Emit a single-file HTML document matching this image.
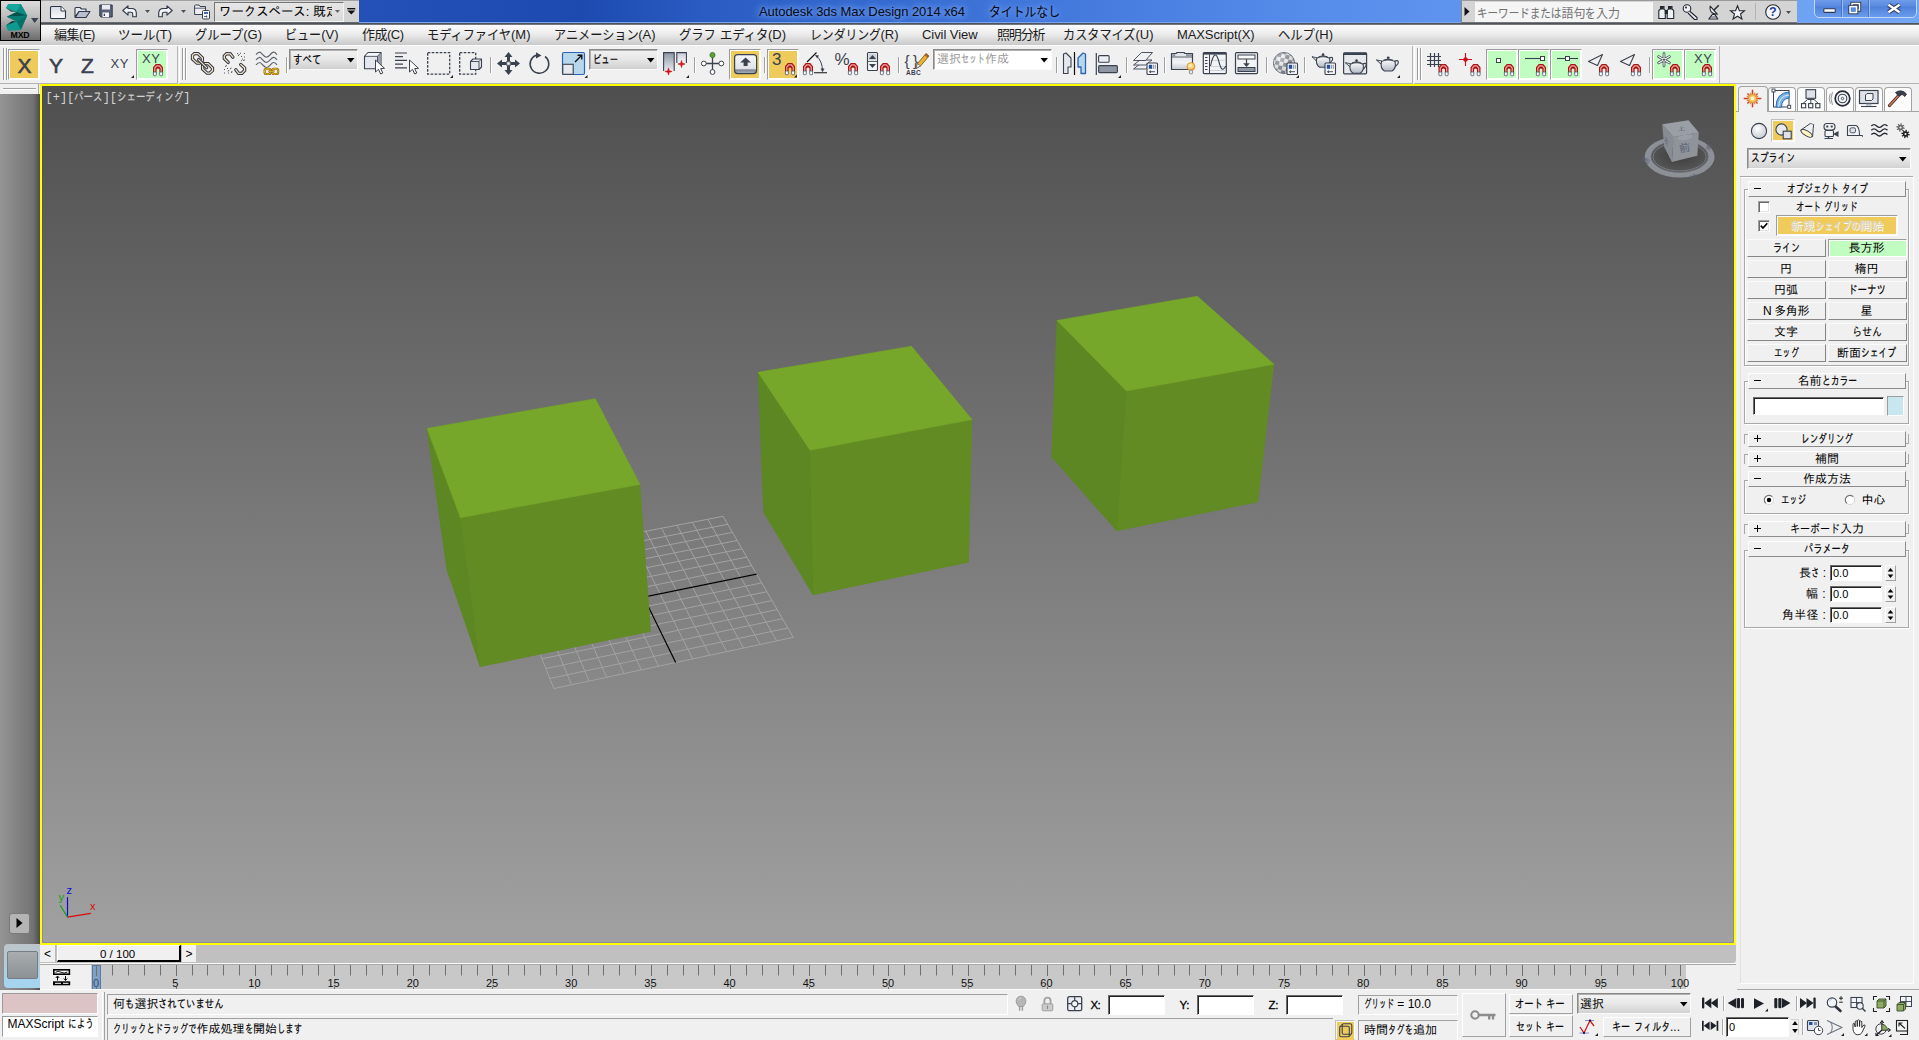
<!DOCTYPE html><html lang="ja"><head><meta charset="utf-8"><title>Autodesk 3ds Max Design 2014 x64</title><style>

html,body{margin:0;padding:0;}
body{width:1919px;height:1040px;overflow:hidden;position:relative;background:#f0f0f0;
 font-family:"Liberation Sans","IPAGothic","Noto Sans CJK JP",sans-serif;font-size:12px;color:#000;}
.a{position:absolute;}
.ui{font-family:"Liberation Sans","IPAGothic","Noto Sans CJK JP",sans-serif;}
.mei{font-family:"Liberation Sans","Noto Sans CJK JP",sans-serif;}
svg{position:absolute;overflow:visible;}


#title{left:0;top:0;width:1919px;height:23px;background:linear-gradient(90deg,#2451b7 0px,#2451b7 360px,#1c4aaf 580px,#2a5bc2 700px,#3f74d8 1000px,#558cea 1300px,#679cf2 1600px,#71a6f5 1919px);}
#titleb{left:0;top:22px;width:1919px;height:1px;background:#7aa6ee;}
#titleb2{left:0;top:23px;width:1919px;height:2px;background:linear-gradient(#3a3f4a,#8a8a8a);}
#menu{left:0;top:25px;width:1919px;height:20px;background:linear-gradient(#fbfbfb,#ececec 45%,#c9c9c9);}
#qat{left:41px;top:0;width:318px;height:23px;background:linear-gradient(#dadada,#d2d2d2);border-bottom:1px solid #6a6a6a;box-sizing:border-box;}
#appbtn{left:0;top:0;width:41px;height:41px;box-sizing:border-box;border:1px solid #000;background:linear-gradient(#dcdcdc,#bdbdbd 40%,#6c6c6c);}
#srch{left:1461px;top:0;width:336px;height:23px;background:#d4d4d4;border-bottom:1px solid #777;border-left:1px solid #888;box-sizing:border-box;}
#wc{left:1814px;top:-4px;width:103px;height:22px;box-sizing:border-box;border:1px solid #c4d6f4;border-radius:0 0 5px 5px;background:linear-gradient(#78a4ee,#5a8ae0 45%,#4f82dc 50%,#6a9cec);}


#tb{left:0;top:45px;width:1919px;height:39px;background:#f0f0f0;}
.dd{box-sizing:border-box;border:1px solid #8a8a8a;border-right-color:#fbfbfb;border-bottom-color:#fbfbfb;box-shadow:inset 1px 1px 0 #b0b0b0;background:linear-gradient(#f2f2f2,#e6e6e6 50%,#d0d0d0);}
.btnon{box-sizing:border-box;border:1px solid #b8b8b8;border-right-color:#fafafa;border-bottom-color:#fafafa;background:#f8f8f8;}


#vp{left:40px;top:84px;width:1696px;height:861px;background:#ffff00;}
#vpi{left:2px;top:2px;width:1692px;height:857px;background:linear-gradient(#4f4f4f,#a1a1a1);overflow:hidden;box-shadow:inset 0 0 0 1px rgba(70,70,120,0.22);}



#rp{left:1736px;top:84px;width:183px;height:906px;background:#f0f0f0;}
.hd{box-sizing:border-box;border:1px solid #fff;border-right-color:#8c8c8c;border-bottom-color:#8c8c8c;background:#f0f0f0;}
.bt{box-sizing:border-box;border:1px solid #fafafa;border-right-color:#868686;border-bottom-color:#868686;background:#f0f0f0;}
.bton{box-sizing:border-box;border:1px solid #9c9c9c;border-right-color:#fff;border-bottom-color:#fff;background:#fafafa;}
.fr{box-sizing:border-box;border:1px solid #a8a8a8;box-shadow:1px 1px 0 #fff, inset 1px 1px 0 #fff;}
.inp{box-sizing:border-box;border:1px solid #6a6a6a;border-right-color:#fff;border-bottom-color:#fff;box-shadow:inset 1px 1px 0 #222;background:#fff;}
.tab{box-sizing:border-box;border:1px solid #a4a4a4;border-bottom:none;border-radius:4px 4px 0 0;background:#fcfcfc;}


#ls{left:0;top:94px;width:40px;height:896px;background:linear-gradient(90deg,#959595 0,#8a8a8a 25%,#808080 50%,#777777 75%,#707070 84%,#5c5c5c 93%,#4c4c52 100%);}
#lstop{left:0;top:84px;width:40px;height:10px;background:#f0f0f0;}
#tsl{left:40px;top:945px;width:1696px;height:18px;background:#c0c0c0;border-radius:0 0 3px 0;}
#trk{left:91px;top:965px;width:1595px;height:24px;background:#c8c8c8;}
#trkl{left:40px;top:965px;width:51px;height:25px;background:#f0f0f0;}
#st{left:0;top:990px;width:1919px;height:50px;background:#f0f0f0;}
.sunk{box-sizing:border-box;border:1px solid #a0a0a0;border-right-color:#fff;border-bottom-color:#fff;background:#f0f0f0;}
.inp2{box-sizing:border-box;border:1px solid #6a6a6a;border-right-color:#fff;border-bottom-color:#fff;box-shadow:inset 1px 1px 0 #222;background:#fff;}
.rb{box-sizing:border-box;border:1px solid #fff;border-right-color:#a0a0a0;border-bottom-color:#a0a0a0;background:#f0f0f0;}

</style></head><body>
<div id="title" class="a"></div><div id="titleb" class="a"></div><div id="titleb2" class="a"></div><div id="menu" class="a"></div><div id="qat" class="a"></div><div class="a" style="left:41px;top:0px;width:318px;height:1px;background:#a2a2a2;"></div><div class="a" style="left:759px;top:4px;font-size:13px;color:#0a0a14;white-space:pre;line-height:16px;letter-spacing:-0.07px;text-shadow:0 0 5px #78a6f4,0 0 9px #78a6f4,0 0 12px #6a9cf0;">Autodesk 3ds Max Design 2014 x64</div><div class="a" style="left:989px;top:4px;font-size:13px;color:#0a0a14;white-space:pre;line-height:16px;font-family:'Liberation Sans','Noto Sans CJK JP',sans-serif;text-shadow:0 0 5px #78a6f4,0 0 9px #78a6f4,0 0 12px #6a9cf0;"><span style="display:inline-block;width:71.00px;vertical-align:top"><span style="display:inline-block;transform:scaleX(0.910);transform-origin:0 50%;-webkit-text-stroke:0.08px">タイトルなし</span></span></div><div class="a" style="left:54px;top:27px;font-size:13px;color:#1c1c1c;white-space:pre;line-height:16px;font-family:'Liberation Sans','Noto Sans CJK JP',sans-serif;letter-spacing:-0.47px;">編集(E)</div><div class="a" style="left:118px;top:27px;font-size:13px;color:#1c1c1c;white-space:pre;line-height:16px;font-family:'Liberation Sans','Noto Sans CJK JP',sans-serif;"><span style="display:inline-block;width:37.39px;vertical-align:top"><span style="display:inline-block;transform:scaleX(0.958);transform-origin:0 50%;-webkit-text-stroke:0.08px">ツール</span></span>(T)</div><div class="a" style="left:195px;top:27px;font-size:13px;color:#1c1c1c;white-space:pre;line-height:16px;font-family:'Liberation Sans','Noto Sans CJK JP',sans-serif;"><span style="display:inline-block;width:48.22px;vertical-align:top"><span style="display:inline-block;transform:scaleX(0.941);transform-origin:0 50%;-webkit-text-stroke:0.08px">グループ</span></span>(G)</div><div class="a" style="left:285px;top:27px;font-size:13px;color:#1c1c1c;white-space:pre;line-height:16px;font-family:'Liberation Sans','Noto Sans CJK JP',sans-serif;"><span style="display:inline-block;width:36.16px;vertical-align:top"><span style="display:inline-block;transform:scaleX(0.927);transform-origin:0 50%;-webkit-text-stroke:0.08px">ビュー</span></span>(V)</div><div class="a" style="left:362px;top:27px;font-size:13px;color:#1c1c1c;white-space:pre;line-height:16px;font-family:'Liberation Sans','Noto Sans CJK JP',sans-serif;letter-spacing:-0.51px;">作成(C)</div><div class="a" style="left:427px;top:27px;font-size:13px;color:#1c1c1c;white-space:pre;line-height:16px;font-family:'Liberation Sans','Noto Sans CJK JP',sans-serif;"><span style="display:inline-block;width:84.00px;vertical-align:top"><span style="display:inline-block;transform:scaleX(0.936);transform-origin:0 50%;-webkit-text-stroke:0.08px">モディファイヤ</span></span>(M)</div><div class="a" style="left:553.5px;top:27px;font-size:13px;color:#1c1c1c;white-space:pre;line-height:16px;font-family:'Liberation Sans','Noto Sans CJK JP',sans-serif;"><span style="display:inline-block;width:84.66px;vertical-align:top"><span style="display:inline-block;transform:scaleX(0.936);transform-origin:0 50%;-webkit-text-stroke:0.08px">アニメーション</span></span>(A)</div><div class="a" style="left:679px;top:27px;font-size:13px;color:#1c1c1c;white-space:pre;line-height:16px;font-family:'Liberation Sans','Noto Sans CJK JP',sans-serif;"><span style="display:inline-block;width:36.95px;vertical-align:top"><span style="display:inline-block;transform:scaleX(0.947);transform-origin:0 50%;-webkit-text-stroke:0.08px">グラフ</span></span> <span style="display:inline-block;width:48.38px;vertical-align:top"><span style="display:inline-block;transform:scaleX(0.947);transform-origin:0 50%;-webkit-text-stroke:0.08px">エディタ</span></span>(D)</div><div class="a" style="left:809.5px;top:27px;font-size:13px;color:#1c1c1c;white-space:pre;line-height:16px;font-family:'Liberation Sans','Noto Sans CJK JP',sans-serif;"><span style="display:inline-block;width:70.95px;vertical-align:top"><span style="display:inline-block;transform:scaleX(0.909);transform-origin:0 50%;-webkit-text-stroke:0.08px">レンダリング</span></span>(R)</div><div class="a" style="left:922px;top:27px;font-size:13px;color:#1c1c1c;white-space:pre;line-height:16px;font-family:'Liberation Sans','Noto Sans CJK JP',sans-serif;letter-spacing:-0.06px;">Civil View</div><div class="a" style="left:997px;top:27px;font-size:13px;color:#1c1c1c;white-space:pre;line-height:16px;font-family:'Liberation Sans','Noto Sans CJK JP',sans-serif;letter-spacing:-1.13px;">照明分析</div><div class="a" style="left:1063px;top:27px;font-size:13px;color:#1c1c1c;white-space:pre;line-height:16px;font-family:'Liberation Sans','Noto Sans CJK JP',sans-serif;"><span style="display:inline-block;width:72.45px;vertical-align:top"><span style="display:inline-block;transform:scaleX(0.933);transform-origin:0 50%;-webkit-text-stroke:0.08px">カスタマイズ</span></span>(U)</div><div class="a" style="left:1177px;top:27px;font-size:13px;color:#1c1c1c;white-space:pre;line-height:16px;font-family:'Liberation Sans','Noto Sans CJK JP',sans-serif;letter-spacing:-0.10px;">MAXScript(X)</div><div class="a" style="left:1278px;top:27px;font-size:13px;color:#1c1c1c;white-space:pre;line-height:16px;font-family:'Liberation Sans','Noto Sans CJK JP',sans-serif;"><span style="display:inline-block;width:36.95px;vertical-align:top"><span style="display:inline-block;transform:scaleX(0.947);transform-origin:0 50%;-webkit-text-stroke:0.08px">ヘルプ</span></span>(H)</div><div id="appbtn" class="a"></div><svg style="left:0px;top:0px" width="41" height="41" viewBox="0 0 41 41"><polygon points="6,8 8.2,4.2 20.8,4 27.2,15.5 20.8,30 8.2,30.6 6,25.2 16.5,21.5 6.8,16.8 16.5,12" fill="#0c8f86"/><polygon points="6,8 8.2,4.2 20.8,4 16.5,12" fill="#17a69b"/><polygon points="20.8,4 27.2,15.5 16.5,12" fill="#0d8c83"/><polygon points="16.5,12 27.2,15.5 6.8,16.8" fill="#04524e"/><polygon points="6.8,16.8 27.2,15.5 16.5,21.5" fill="#0a7d75"/><polygon points="16.5,21.5 27.2,15.5 20.8,30" fill="#087068"/><polygon points="16.5,21.5 20.8,30 8.2,30.6 6,25.2" fill="#10998f"/><polygon points="16.5,21.5 6,25.2 12,21" fill="#033f3c"/><polygon points="16.5,12 6,8 11,11.8" fill="#033f3c" opacity="0.8"/><polygon points="31,18 38.5,18 34.7,23" fill="#39414e"/></svg><div class="a" style="left:10.5px;top:30px;font-size:8.8px;color:#000;white-space:pre;line-height:10px;font-weight:bold;letter-spacing:-0.19px;">MXD</div><svg style="left:50px;top:5px" width="16" height="15" viewBox="0 0 16 15"><defs><linearGradient id="gpaper" x1="0" y1="0" x2="0" y2="1"><stop offset="0" stop-color="#d7dbe4"/><stop offset="1" stop-color="#fbfbfd"/></linearGradient></defs><path d="M1.5 1.5H11L15.5 6V12.5Q15.5 13.5 14.5 13.5H1.5Q0.5 13.5 0.5 12.5V2.5Q0.5 1.5 1.5 1.5Z" fill="url(#gpaper)" stroke="#2f3848" stroke-width="1.1"/><path d="M11 1.5V6H15.5" fill="#fff" stroke="#2f3848" stroke-width="1"/></svg><svg style="left:73.5px;top:4.5px" width="17" height="14" viewBox="0 0 17 14"><path d="M1 3.5Q1 2.5 2 2.5H6L7.5 4H12V6.5H5L1 12Z" fill="#e8eaf0" stroke="#2f3848" stroke-width="1.1" stroke-linejoin="round"/><path d="M1.3 12.5L5 6.5H16L12 12.5Z" fill="#b9bfcc" stroke="#2f3848" stroke-width="1.1" stroke-linejoin="round"/></svg><svg style="left:99px;top:4px" width="14" height="14" viewBox="0 0 14 14"><path d="M0.8 1H13.2V13H2L0.8 12Z" fill="#586379" stroke="#2f3848" stroke-width="1"/><rect x="3" y="1" width="8" height="4.5" fill="#e9ebf0"/><rect x="3.5" y="8.5" width="6.5" height="4.5" fill="#f4f5f8"/><rect x="4.7" y="9.8" width="1.3" height="2.2" fill="#2f3848"/></svg><svg style="left:122px;top:4.5px" width="15" height="13" viewBox="0 0 15 13"><path d="M0.8 5.5L6 0.9V3.5H9.5Q14.3 3.5 14.3 8.3V11.8H10.7V8.8Q10.7 7.2 9 7.2H6V10.2Z" fill="#f2f3f6" stroke="#2f3848" stroke-width="1.1" stroke-linejoin="round"/></svg><svg style="left:145px;top:10px" width="5" height="4" viewBox="0 0 5 4"><polygon points="0,0 5,0 2.5,3" fill="#4a4f5a"/></svg><svg style="left:158px;top:4.5px" width="15" height="13" viewBox="0 0 15 13"><path d="M14.2 5.5L9 0.9V3.5H5.5Q0.7 3.5 0.7 8.3V11.8H4.3V8.8Q4.3 7.2 6 7.2H9V10.2Z" fill="#f2f3f6" stroke="#2f3848" stroke-width="1.1" stroke-linejoin="round"/></svg><svg style="left:181px;top:10px" width="5" height="4" viewBox="0 0 5 4"><polygon points="0,0 5,0 2.5,3" fill="#4a4f5a"/></svg><svg style="left:194px;top:3.5px" width="17" height="16" viewBox="0 0 17 16"><path d="M0.6 2Q0.6 1 1.6 1H5L6 2.5H11.5V10.5H0.6Z" fill="#eceef2" stroke="#3a4252" stroke-width="1"/><path d="M0.6 4.2H11.5" stroke="#3a4252" stroke-width="0.8"/><rect x="8.5" y="6.5" width="7" height="8.5" rx="1" fill="#f6f7fa" stroke="#3a4252" stroke-width="1"/><rect x="10" y="8" width="4" height="2" fill="#4a6ab0"/><path d="M10 12.5H13M12 11.5L13.2 12.5L12 13.5" stroke="#3a4252" stroke-width="0.8" fill="none"/></svg><div class="a" style="left:214px;top:2px;width:130px;height:20px;box-sizing:border-box;border:1px solid #767676;border-right-color:#f4f4f4;border-bottom-color:#f4f4f4;background:linear-gradient(#e6e6e6,#dadada);"></div><div class="a" style="left:219px;top:4px;font-size:13px;color:#000;white-space:pre;line-height:16px;width:113px;overflow:hidden;"><span style="display:inline-block;width:86.77px;vertical-align:top"><span style="display:inline-block;transform:scaleX(0.953);transform-origin:0 50%;-webkit-text-stroke:0.08px">ワークスペース</span></span>: 既定</div><svg style="left:334.5px;top:10px" width="5" height="4" viewBox="0 0 5 4"><polygon points="0,0 5,0 2.5,3" fill="#666"/></svg><svg style="left:347px;top:7.5px" width="9" height="7" viewBox="0 0 9 7"><rect x="0.3" y="0" width="8" height="1.4" fill="#111"/><polygon points="0.3,2.6 8.3,2.6 4.3,6.6" fill="#111"/></svg><div id="srch" class="a"></div><div class="a" style="left:1461px;top:0px;width:336px;height:1px;background:#9a9a9a;"></div><svg style="left:1464px;top:7px" width="6" height="9" viewBox="0 0 6 9"><polygon points="0.5,0 5.5,4.5 0.5,9" fill="#111"/></svg><div class="a" style="left:1475px;top:2px;width:178px;height:20px;background:#f5f5f5;box-sizing:border-box;"></div><div class="a" style="left:1477px;top:6px;font-size:12px;color:#747474;white-space:pre;line-height:16px;font-family:'Liberation Sans','Noto Sans CJK JP',sans-serif;"><span style="display:inline-block;width:84.41px;vertical-align:top"><span style="display:inline-block;transform:scaleX(0.879);transform-origin:0 50%;-webkit-text-stroke:0.08px">キーワードまたは</span></span>語句<span style="display:inline-block;width:10.56px;vertical-align:top"><span style="display:inline-block;transform:scaleX(0.879);transform-origin:0 50%;-webkit-text-stroke:0.08px">を</span></span>入力</div><svg style="left:1657.5px;top:5px" width="17" height="15" viewBox="0 0 17 15"><path d="M2.5 1.5H6V4L7.3 5.5V13.5H0.8V5.5L2.5 4Z" fill="#eef0f4" stroke="#23272f" stroke-width="1.1"/><path d="M10.5 1.5H14V4L15.7 5.5V13.5H9.2V5.5L10.5 4Z" fill="#eef0f4" stroke="#23272f" stroke-width="1.1"/><rect x="6.8" y="5" width="3" height="4" fill="#23272f"/><rect x="2.8" y="1.5" width="3" height="3" fill="#23272f"/><rect x="10.8" y="1.5" width="3" height="3" fill="#23272f"/></svg><svg style="left:1682px;top:4px" width="16" height="16" viewBox="0 0 16 16"><circle cx="5" cy="4.5" r="3.8" fill="#eef0f4" stroke="#23272f" stroke-width="1.1"/><circle cx="4" cy="3.5" r="1" fill="#23272f"/><path d="M7.5 7L15 13.5V15.5H12.5L6 9" fill="#eef0f4" stroke="#23272f" stroke-width="1.1" stroke-linejoin="round"/></svg><svg style="left:1706.5px;top:4px" width="14" height="16" viewBox="0 0 14 16"><path d="M3.2 2.2Q1.5 9.5 10.3 10.2Z" fill="#eef0f4" stroke="#23272f" stroke-width="1.1" stroke-linejoin="round"/><path d="M6.8 6.3L11.8 1.2" stroke="#23272f" stroke-width="1.5"/><path d="M5.5 10.2L1.8 15H10.8L8 10.6Z" fill="#eef0f4" stroke="#23272f" stroke-width="1.1" stroke-linejoin="round"/><path d="M3.5 13H9.3" stroke="#23272f" stroke-width="0.8"/></svg><svg style="left:1730px;top:4.5px" width="15" height="15" viewBox="0 0 15 15"><polygon points="7.5,0.8 9.4,5.6 14.5,5.8 10.5,9 11.9,14 7.5,11.2 3.1,14 4.5,9 0.5,5.8 5.6,5.6" fill="#f4f5f8" stroke="#23272f" stroke-width="1.1" stroke-linejoin="miter"/></svg><div class="a" style="left:1755px;top:3px;width:1px;height:17px;background:#b4b4b4;"></div><svg style="left:1765px;top:3.5px" width="16" height="16" viewBox="0 0 16 16"><circle cx="8" cy="8" r="7.3" fill="#f4f5f8" stroke="#23272f" stroke-width="1.1"/></svg><div class="a" style="left:1769px;top:4.5px;font-size:12.5px;color:#1c3fa8;white-space:pre;line-height:14px;font-weight:bold;">?</div><svg style="left:1786px;top:10.5px" width="5" height="4" viewBox="0 0 5 4"><polygon points="0,0 5,0 2.5,3" fill="#4a4f5a"/></svg><div id="wc" class="a"></div><div class="a" style="left:1842px;top:0px;width:1px;height:17px;background:#9dbbee;"></div><div class="a" style="left:1869px;top:0px;width:1px;height:17px;background:#9dbbee;"></div><div class="a" style="left:1841px;top:0px;width:1px;height:17px;background:#4674c8;"></div><div class="a" style="left:1868px;top:0px;width:1px;height:17px;background:#4674c8;"></div><svg style="left:1823px;top:7.5px" width="14" height="6" viewBox="0 0 14 6"><rect x="0.8" y="0.8" width="11.5" height="3.6" rx="0.8" fill="#fff" stroke="#2e3a52" stroke-width="1.1"/></svg><svg style="left:1848px;top:1.5px" width="14" height="13" viewBox="0 0 14 13"><rect x="4" y="1.5" width="7.5" height="6.5" fill="none" stroke="#2e3a52" stroke-width="3.4"/><rect x="4" y="1.5" width="7.5" height="6.5" fill="none" stroke="#fff" stroke-width="1.5"/><rect x="2" y="4.6" width="6.6" height="6" fill="#5a8ae0" stroke="#2e3a52" stroke-width="3.4"/><rect x="2" y="4.6" width="6.6" height="6" fill="#5a8ae0" stroke="#fff" stroke-width="1.5"/></svg><svg style="left:1885.5px;top:3px" width="16" height="11" viewBox="0 0 16 11"><path d="M2.5 1.8L13.5 9.2M13.5 1.8L2.5 9.2" stroke="#2e3a52" stroke-width="4.6"/><path d="M2.5 1.8L13.5 9.2M13.5 1.8L2.5 9.2" stroke="#fff" stroke-width="2.5"/></svg>
<div id="tb" class="a"></div><div class="a" style="left:0px;top:45px;width:1919px;height:1px;background:#fdfdfd;"></div><div class="a" style="left:0px;top:83px;width:177px;height:1px;background:#b4b4b4;"></div><div class="a" style="left:177px;top:46px;width:1px;height:38px;background:#b4b4b4;"></div><div class="a" style="left:179px;top:83px;width:1233px;height:1px;background:#b4b4b4;"></div><div class="a" style="left:1412px;top:46px;width:1px;height:38px;background:#b4b4b4;"></div><div class="a" style="left:179px;top:46px;width:1px;height:37px;background:#fff;"></div><div class="a" style="left:1414px;top:83px;width:1305px;height:1px;background:#b4b4b4;"></div><div class="a" style="left:1719px;top:46px;width:1px;height:38px;background:#b4b4b4;"></div><div class="a" style="left:1414px;top:46px;width:1px;height:37px;background:#fff;"></div><div class="a" style="left:8px;top:49px;width:32px;height:31px;box-sizing:border-box;border:1px solid #9c9c9c;border-right-color:#fff;border-bottom-color:#fff;background:#fff;"></div><div class="a" style="left:10px;top:51px;width:28px;height:27px;background:#efcb5b;"></div><div class="a" style="left:136px;top:49px;width:32px;height:31px;box-sizing:border-box;border:1px solid #9c9c9c;border-right-color:#fff;border-bottom-color:#fff;background:#fff;"></div><div class="a" style="left:138px;top:51px;width:28px;height:27px;background:#c1fdc1;"></div><div class="a" style="left:729px;top:49px;width:32px;height:31px;box-sizing:border-box;border:1px solid #9c9c9c;border-right-color:#fff;border-bottom-color:#fff;background:#fff;"></div><div class="a" style="left:731px;top:51px;width:28px;height:27px;background:#efcb5b;"></div><div class="a" style="left:767px;top:49px;width:32px;height:31px;box-sizing:border-box;border:1px solid #9c9c9c;border-right-color:#fff;border-bottom-color:#fff;background:#fff;"></div><div class="a" style="left:769px;top:51px;width:28px;height:27px;background:#efcb5b;"></div><div class="a" style="left:1486px;top:49px;width:32px;height:31px;box-sizing:border-box;border:1px solid #9c9c9c;border-right-color:#fff;border-bottom-color:#fff;background:#fff;"></div><div class="a" style="left:1488px;top:51px;width:28px;height:27px;background:#c1fdc1;"></div><div class="a" style="left:1518px;top:49px;width:32px;height:31px;box-sizing:border-box;border:1px solid #9c9c9c;border-right-color:#fff;border-bottom-color:#fff;background:#fff;"></div><div class="a" style="left:1520px;top:51px;width:28px;height:27px;background:#c1fdc1;"></div><div class="a" style="left:1550px;top:49px;width:32px;height:31px;box-sizing:border-box;border:1px solid #9c9c9c;border-right-color:#fff;border-bottom-color:#fff;background:#fff;"></div><div class="a" style="left:1552px;top:51px;width:28px;height:27px;background:#c1fdc1;"></div><div class="a" style="left:1652px;top:49px;width:32px;height:31px;box-sizing:border-box;border:1px solid #9c9c9c;border-right-color:#fff;border-bottom-color:#fff;background:#fff;"></div><div class="a" style="left:1654px;top:51px;width:28px;height:27px;background:#c1fdc1;"></div><div class="a" style="left:1684px;top:49px;width:32px;height:31px;box-sizing:border-box;border:1px solid #9c9c9c;border-right-color:#fff;border-bottom-color:#fff;background:#fff;"></div><div class="a" style="left:1686px;top:51px;width:28px;height:27px;background:#c1fdc1;"></div><div class="a dd" style="left:289px;top:49px;width:69px;height:21px"></div><div class="a dd" style="left:589px;top:49px;width:69px;height:21px"></div><div class="a" style="left:933px;top:49px;width:119px;height:21px;box-sizing:border-box;border:1px solid #8a8a8a;border-right-color:#fbfbfb;border-bottom-color:#fbfbfb;box-shadow:inset 1px 1px 0 #b0b0b0;background:#fff;"></div><div class="a" style="left:292.5px;top:52.5px;font-size:12.5px;color:#000;white-space:pre;line-height:15px;"><span style="display:inline-block;width:28.50px;vertical-align:top"><span style="display:inline-block;transform:scaleX(0.760);transform-origin:0 50%;-webkit-text-stroke:0.18px">すべて</span></span></div><div class="a" style="left:593px;top:52.5px;font-size:12.5px;color:#000;white-space:pre;line-height:15px;"><span style="display:inline-block;width:25.00px;vertical-align:top"><span style="display:inline-block;transform:scaleX(0.667);transform-origin:0 50%;-webkit-text-stroke:0.18px">ビュー</span></span></div><div class="a" style="left:937px;top:52px;font-size:12px;color:#9a9a9a;white-space:pre;line-height:15px;">選択<span style="display:inline-block;width:24.00px;vertical-align:top"><span style="display:inline-block;transform:scaleX(0.667);transform-origin:0 50%;-webkit-text-stroke:0.18px">セット</span></span>作成</div><div class="a" style="left:17.5px;top:54.5px;font-size:21px;color:#3b424f;white-space:pre;line-height:22px;-webkit-text-stroke:0.6px #3b424f;">X</div><div class="a" style="left:49px;top:54.5px;font-size:21px;color:#3b424f;white-space:pre;line-height:22px;-webkit-text-stroke:0.6px #3b424f;">Y</div><div class="a" style="left:81px;top:54.5px;font-size:21px;color:#3b424f;white-space:pre;line-height:22px;-webkit-text-stroke:0.6px #3b424f;">Z</div><div class="a" style="left:110.5px;top:56px;font-size:13px;color:#3b424f;white-space:pre;line-height:16px;letter-spacing:0.58px;">XY</div><div class="a" style="left:142px;top:51px;font-size:13px;color:#3b424f;white-space:pre;line-height:16px;letter-spacing:0.58px;">XY</div><div class="a" style="left:1694px;top:51px;font-size:13px;color:#3b424f;white-space:pre;line-height:16px;letter-spacing:0.58px;">XY</div><div class="a" style="left:772px;top:50px;font-size:17px;color:#3b424f;white-space:pre;line-height:19px;">3</div><div class="a" style="left:834.5px;top:50px;font-size:17px;color:#3b424f;white-space:pre;line-height:19px;letter-spacing:-1.12px;">%</div><div class="a" style="left:906px;top:69px;font-size:6.5px;color:#3b424f;white-space:pre;line-height:8px;font-weight:bold;letter-spacing:0.30px;">ABC</div><div class="a" style="left:904.5px;top:50.5px;font-size:15px;color:#3b424f;white-space:pre;line-height:20px;letter-spacing:-0.40px;">{ }</div><svg style="left:0;top:0" width="1919" height="90" viewBox="0 0 1919 90"><path d="M3.5 48V80M6.5 48V80" stroke="#9a9a9a" stroke-width="1"/><path d="M4.5 48V80M7.5 48V80" stroke="#fff" stroke-width="1"/><path d="M182.5 48V80M185.5 48V80" stroke="#9a9a9a" stroke-width="1"/><path d="M183.5 48V80M186.5 48V80" stroke="#fff" stroke-width="1"/><path d="M1417.5 48V80M1420.5 48V80" stroke="#9a9a9a" stroke-width="1"/><path d="M1418.5 48V80M1421.5 48V80" stroke="#fff" stroke-width="1"/><polygon points="131,78 134,78 134,75" fill="#222"/><g transform="translate(153,64)"><path d="M0 8.3V3.3L2.8 0H7.2L10 3.3V8.3H6.4V5.2Q5 3.6 3.6 5.2V8.3Z" fill="#a81414"/><path d="M1.8 8V4L3.7 1.8H6.3L8.2 4V8" fill="none" stroke="#f2a4a4" stroke-width="1.2"/><path d="M0.4 8H3.3V11Q3.3 11.7 2.6 11.7H1.1Q0.4 11.7 0.4 11Z" fill="#fff" stroke="#4a5568" stroke-width="0.8"/><path d="M6.7 8H9.6V11Q9.6 11.7 8.9 11.7H7.4Q6.7 11.7 6.7 11Z" fill="#fff" stroke="#4a5568" stroke-width="0.8"/></g><path d="M194.4 53.6L198.0 53.6L202.4 58.0L202.4 60.6L199.5 63.2L197.0 63.2L192.5 59.0L192.5 55.4Z" fill="none" stroke="#2f3644" stroke-width="3.3" stroke-linejoin="miter" stroke-linecap="butt"/><path d="M194.4 53.6L198.0 53.6L202.4 58.0L202.4 60.6L199.5 63.2L197.0 63.2L192.5 59.0L192.5 55.4Z" fill="none" stroke="#f4e2c0" stroke-width="1.3" stroke-linejoin="miter" stroke-linecap="butt"/><path d="M204.5 63.6L208.1 63.6L212.5 68.0L212.5 70.6L209.6 73.2L207.1 73.2L202.6 69.0L202.6 65.4Z" fill="none" stroke="#2f3644" stroke-width="3.3" stroke-linejoin="miter" stroke-linecap="butt"/><path d="M204.5 63.6L208.1 63.6L212.5 68.0L212.5 70.6L209.6 73.2L207.1 73.2L202.6 69.0L202.6 65.4Z" fill="none" stroke="#f4e2c0" stroke-width="1.3" stroke-linejoin="miter" stroke-linecap="butt"/><path d="M198.6 59.6L206.6 67.6" fill="none" stroke="#2f3644" stroke-width="3.3" stroke-linejoin="miter" stroke-linecap="round"/><path d="M198.6 59.6L206.6 67.6" fill="none" stroke="#f4e2c0" stroke-width="1.3" stroke-linejoin="miter" stroke-linecap="round"/><path d="M232.9 57.2L230.3 53.8L226.6 53.6L224.3 55.9L224.3 58.5L228.2 62.4" fill="none" stroke="#2f3644" stroke-width="3.3" stroke-linejoin="miter" stroke-linecap="round"/><path d="M232.9 57.2L230.3 53.8L226.6 53.6L224.3 55.9L224.3 58.5L228.2 62.4" fill="none" stroke="#f4e2c0" stroke-width="1.3" stroke-linejoin="miter" stroke-linecap="round"/><path d="M240.7 64.5L244.6 67.9L244.6 70.5L241.8 73.4L238.6 73.4L235.8 69.7" fill="none" stroke="#2f3644" stroke-width="3.3" stroke-linejoin="miter" stroke-linecap="round"/><path d="M240.7 64.5L244.6 67.9L244.6 70.5L241.8 73.4L238.6 73.4L235.8 69.7" fill="none" stroke="#f4e2c0" stroke-width="1.3" stroke-linejoin="miter" stroke-linecap="round"/><path d="M237 53.5h1M240 53.2h1M244 53.5h1M238 56l1.5-2M241 56.5h1M244 57h1M242 59h1M243 60.5l2-0.7M241 61l1-0.5M225 66.5l2-1M224 69.5h1M227 68.5h1M230 69l1.5-1M228 71.5l1-1.5M224 73h1M228 73h1M231.5 73l0.5-2" stroke="#444" stroke-width="0.9" fill="none"/><path d="M256 54.6C258 52.2 259 52.2 260 52.2S264 57.2 266.5 57.2S271.5 52.2 273.5 52.2S276 53.6 277 54.6" fill="none" stroke="#5c626b" stroke-width="1.2"/><path d="M256 59.8C258 57.4 259 57.4 260 57.4S264 62.4 266.5 62.4S271.5 57.4 273.5 57.4S276 58.8 277 59.8" fill="none" stroke="#5c626b" stroke-width="1.2"/><path d="M256 64.9C258 62.5 259 62.5 260 62.5S264 67.5 266.5 67.5S271.5 62.5 273.5 62.5S276 63.9 277 64.9" fill="none" stroke="#5c626b" stroke-width="1.2"/><rect x="264.6" y="68.8" width="6" height="5.2" rx="1.8" fill="none" stroke="#8a6508" stroke-width="2.1"/><rect x="264.6" y="68.8" width="6" height="5.2" rx="1.8" fill="none" stroke="#f0c22c" stroke-width="1"/><rect x="272.2" y="68.8" width="6" height="5.2" rx="1.8" fill="none" stroke="#8a6508" stroke-width="2.1"/><rect x="272.2" y="68.8" width="6" height="5.2" rx="1.8" fill="none" stroke="#f0c22c" stroke-width="1"/><path d="M268.5 71.4H274.5" stroke="#8a6508" stroke-width="2"/><path d="M269 71.4H274" stroke="#f0c22c" stroke-width="0.9"/><path d="M286.5 57V73" stroke="#a0a0a0" stroke-width="1"/><path d="M287.5 57V73" stroke="#fff" stroke-width="1"/><polygon points="347,58 354.5,58 350.7,62.5" fill="#000"/><polygon points="647,58 654.5,58 650.7,62.5" fill="#000"/><polygon points="1040.5,58 1048,58 1044.2,62.5" fill="#000"/><path d="M364.5 56.3L368 52.5H381V65L377.5 68.8H364.5Z" fill="#e4e8ee" stroke="#3b424f" stroke-width="1.1" stroke-linejoin="round"/><path d="M377.8 56.6L380.6 53.5V64.8L377.8 67.8Z" fill="#98a0ae"/><path d="M364.5 56.3H377.5V68.8M377.5 56.3L381 52.5" fill="none" stroke="#3b424f" stroke-width="0.9"/><path d="M365.5 55.5L368.3 53.2H379.5L377 55.5Z" fill="#f8f9fb"/><path d="M0 0V12L3 9.3L5.2 14L7.3 13L5.2 8.6L9 8.3Z" transform="translate(375.5,60)" fill="#fff" stroke="#3b424f" stroke-width="1"/><path d="M395 53H407M395 56.7H403M395 60.4H407M395 64.1H403M395 67.8H407" stroke="#3b424f" stroke-width="1.2"/><path d="M0 0V12L3 9.3L5.2 14L7.3 13L5.2 8.6L9 8.3Z" transform="translate(409.5,60)" fill="#fff" stroke="#3b424f" stroke-width="1"/><rect x="427.7" y="52.7" width="22" height="21.5" fill="none" stroke="#3b424f" stroke-width="1.3" stroke-dasharray="2.6 1.4"/><polygon points="450,78 453,78 453,75" fill="#222"/><rect x="459.7" y="52.7" width="16" height="21.5" fill="none" stroke="#3b424f" stroke-width="1.3" stroke-dasharray="2.6 1.4"/><path d="M470.5 61.5L473 59H481.5V67L479 69.5H470.5Z" fill="#e4e7ec" stroke="#3b424f" stroke-width="1.1" stroke-linejoin="round"/><path d="M470.5 61.5H479V69.5M479 61.5L481.5 59" fill="none" stroke="#3b424f" stroke-width="0.9"/><path d="M490.5 57V73" stroke="#a0a0a0" stroke-width="1"/><path d="M491.5 57V73" stroke="#fff" stroke-width="1"/><g fill="#3b424f"><polygon points="508.5,52 512.5,57 510,57 510,61 507,61 507,57 504.5,57"/><polygon points="508.5,75 512.5,70 510,70 510,66 507,66 507,70 504.5,70"/><polygon points="497,63.5 502,59.5 502,62 506,62 506,65 502,65 502,67.5"/><polygon points="520,63.5 515,59.5 515,62 511,62 511,65 515,65 515,67.5"/></g><rect x="506.7" y="61.7" width="3.6" height="3.6" fill="#fff" stroke="#3b424f" stroke-width="1"/><path d="M545 56.5A9.3 9.3 0 1 1 536 55.3" fill="none" stroke="#3b424f" stroke-width="1.6"/><polygon points="536,52.2 541.5,55.5 536,58.6" fill="#3b424f"/><rect x="562.5" y="52.5" width="22" height="22" rx="1.5" fill="#b9d7ea" stroke="#2a62b8" stroke-width="1.2"/><rect x="562.8" y="64.3" width="10.4" height="10" fill="#e6e9ee" stroke="#3b424f" stroke-width="1.1"/><path d="M575 62L581.5 55.5M577.5 55.2H581.8V59.5" fill="none" stroke="#111" stroke-width="1.4"/><polygon points="584.5,78 587.5,78 587.5,75" fill="#222"/><defs><linearGradient id="gp1" x1="0" y1="0" x2="0" y2="1"><stop offset="0" stop-color="#8e95a3"/><stop offset="1" stop-color="#e8eaee"/></linearGradient><linearGradient id="gp2" x1="0" y1="0" x2="0" y2="1"><stop offset="0" stop-color="#c9cdd6"/><stop offset="1" stop-color="#f4f5f7"/></linearGradient></defs><path d="M663.6 71V52.6H674.2V71" fill="url(#gp1)" stroke="#3b424f" stroke-width="1.1"/><path d="M676.8 63V52.6H686.4V63" fill="url(#gp2)" stroke="#3b424f" stroke-width="1.1"/><path d="M0 -3.6L0.8 -0.8L3.6 0L0.8 0.8L0 3.6L-0.8 0.8L-3.6 0L-0.8 -0.8Z" transform="translate(668.5,71.5)" fill="#d01018" stroke="#d01018" stroke-width="0.6"/><path d="M0 -3.6L0.8 -0.8L3.6 0L0.8 0.8L0 3.6L-0.8 0.8L-3.6 0L-0.8 -0.8Z" transform="translate(681.5,64)" fill="#d01018" stroke="#d01018" stroke-width="0.6"/><polygon points="686,78 689,78 689,75" fill="#222"/><path d="M694.5 57V73" stroke="#a0a0a0" stroke-width="1"/><path d="M695.5 57V73" stroke="#fff" stroke-width="1"/><path d="M712.5 56V70M705 63.5H720" stroke="#3b424f" stroke-width="1.3"/><circle cx="712.5" cy="55" r="2.6" fill="#5aa23a" stroke="#3f7a28" stroke-width="0.8"/><circle cx="703.8" cy="63.5" r="2.4" fill="#fff" stroke="#3b424f" stroke-width="1"/><circle cx="721.3" cy="63.5" r="2.4" fill="#fff" stroke="#3b424f" stroke-width="1"/><circle cx="712.5" cy="72" r="2.4" fill="#fff" stroke="#3b424f" stroke-width="1"/><defs><linearGradient id="gk" x1="0" y1="0" x2="0" y2="1"><stop offset="0" stop-color="#f6f7f9"/><stop offset="0.75" stop-color="#dfe2e8"/><stop offset="0.8" stop-color="#7d8594"/><stop offset="1" stop-color="#aab0bc"/></linearGradient></defs><rect x="734.6" y="54.6" width="22" height="19" rx="3" fill="url(#gk)" stroke="#3b424f" stroke-width="1.2"/><polygon points="745.6,57.5 751,62.5 747.6,62.5 747.6,66 743.6,66 743.6,62.5 740.2,62.5" fill="#3b424f"/><path d="M764.5 57V73" stroke="#a0a0a0" stroke-width="1"/><path d="M765.5 57V73" stroke="#fff" stroke-width="1"/><g transform="translate(785,63)"><path d="M0 8.3V3.3L2.8 0H7.2L10 3.3V8.3H6.4V5.2Q5 3.6 3.6 5.2V8.3Z" fill="#a81414"/><path d="M1.8 8V4L3.7 1.8H6.3L8.2 4V8" fill="none" stroke="#f2a4a4" stroke-width="1.2"/><path d="M0.4 8H3.3V11Q3.3 11.7 2.6 11.7H1.1Q0.4 11.7 0.4 11Z" fill="#fff" stroke="#4a5568" stroke-width="0.8"/><path d="M6.7 8H9.6V11Q9.6 11.7 8.9 11.7H7.4Q6.7 11.7 6.7 11Z" fill="#fff" stroke="#4a5568" stroke-width="0.8"/></g><polygon points="794,77.5 797,77.5 797,74.5" fill="#222"/><g transform="translate(803,63)"><path d="M0 8.3V3.3L2.8 0H7.2L10 3.3V8.3H6.4V5.2Q5 3.6 3.6 5.2V8.3Z" fill="#a81414"/><path d="M1.8 8V4L3.7 1.8H6.3L8.2 4V8" fill="none" stroke="#f2a4a4" stroke-width="1.2"/><path d="M0.4 8H3.3V11Q3.3 11.7 2.6 11.7H1.1Q0.4 11.7 0.4 11Z" fill="#fff" stroke="#4a5568" stroke-width="0.8"/><path d="M6.7 8H9.6V11Q9.6 11.7 8.9 11.7H7.4Q6.7 11.7 6.7 11Z" fill="#fff" stroke="#4a5568" stroke-width="0.8"/></g><path d="M807 62L816.5 52.5M814 72.8H827" stroke="#111" stroke-width="1.1"/><path d="M816 55.5Q822.5 61 822.5 71" fill="none" stroke="#3b424f" stroke-width="1"/><polygon points="815,55 819,55.4 817.2,58.4" fill="#3b424f"/><polygon points="820.5,68.5 824.5,68.5 822.6,72.3" fill="#3b424f"/><g transform="translate(848,63)"><path d="M0 8.3V3.3L2.8 0H7.2L10 3.3V8.3H6.4V5.2Q5 3.6 3.6 5.2V8.3Z" fill="#a81414"/><path d="M1.8 8V4L3.7 1.8H6.3L8.2 4V8" fill="none" stroke="#f2a4a4" stroke-width="1.2"/><path d="M0.4 8H3.3V11Q3.3 11.7 2.6 11.7H1.1Q0.4 11.7 0.4 11Z" fill="#fff" stroke="#4a5568" stroke-width="0.8"/><path d="M6.7 8H9.6V11Q9.6 11.7 8.9 11.7H7.4Q6.7 11.7 6.7 11Z" fill="#fff" stroke="#4a5568" stroke-width="0.8"/></g><rect x="867.5" y="52.5" width="10" height="18" rx="1" fill="#f4f5f7" stroke="#3b424f" stroke-width="1.1"/><rect x="868.5" y="53.5" width="8" height="7" fill="#cfd3da"/><path d="M867.5 61.5H877.5" stroke="#3b424f" stroke-width="0.8"/><polygon points="872.5,55 876,59 869,59" fill="#3b424f"/><polygon points="872.5,68 876,64 869,64" fill="#3b424f"/><g transform="translate(880,63)"><path d="M0 8.3V3.3L2.8 0H7.2L10 3.3V8.3H6.4V5.2Q5 3.6 3.6 5.2V8.3Z" fill="#a81414"/><path d="M1.8 8V4L3.7 1.8H6.3L8.2 4V8" fill="none" stroke="#f2a4a4" stroke-width="1.2"/><path d="M0.4 8H3.3V11Q3.3 11.7 2.6 11.7H1.1Q0.4 11.7 0.4 11Z" fill="#fff" stroke="#4a5568" stroke-width="0.8"/><path d="M6.7 8H9.6V11Q9.6 11.7 8.9 11.7H7.4Q6.7 11.7 6.7 11Z" fill="#fff" stroke="#4a5568" stroke-width="0.8"/></g><path d="M898.5 57V73" stroke="#a0a0a0" stroke-width="1"/><path d="M899.5 57V73" stroke="#fff" stroke-width="1"/><path d="M916 68.5L917.5 63.5L926 53.5L929 56L920.5 66Z" fill="#f0b030" stroke="#7a5a20" stroke-width="0.9"/><path d="M926 53.5L929 56L927.5 57.8L924.5 55.3Z" fill="#a0622a"/><path d="M916 68.5L917.5 63.5L920.5 66Z" fill="#f4f4f4" stroke="#555" stroke-width="0.7"/><path d="M1056.5 57V73" stroke="#a0a0a0" stroke-width="1"/><path d="M1057.5 57V73" stroke="#fff" stroke-width="1"/><path d="M1063.5 73.5V54L1066 53L1071 58V67H1068V73.5Z" fill="#e4e7ec" stroke="#3b424f" stroke-width="1.1" stroke-linejoin="round"/><path d="M1074.5 52V75" stroke="#111" stroke-width="1.2"/><path d="M1085.5 73.5V54L1083 53L1078 58V67H1081V73.5Z" fill="#b9d7ea" stroke="#2a62b8" stroke-width="1.3" stroke-linejoin="round"/><path d="M1096.3 53V75" stroke="#3b424f" stroke-width="1.2"/><rect x="1098.6" y="55.6" width="10.5" height="6.6" rx="1" fill="#eceef2" stroke="#3b424f" stroke-width="1.1"/><rect x="1098.6" y="65.6" width="18.8" height="7" rx="1" fill="#8e95a3" stroke="#3b424f" stroke-width="1.1"/><polygon points="1118,78 1121,78 1121,75" fill="#222"/><path d="M1126.5 57V73" stroke="#a0a0a0" stroke-width="1"/><path d="M1127.5 57V73" stroke="#fff" stroke-width="1"/><g fill="#f0f1f4" stroke="#3b424f" stroke-width="0.9" stroke-linejoin="round"><path d="M1133.5 69L1140 64H1152L1145.5 69Z"/><path d="M1133.5 65L1140 60H1152L1145.5 65Z"/><path d="M1133.5 60.5L1141.5 52.5H1152.5L1145.5 60.5Z"/></g><g transform="translate(1146.5,62.5)"><rect x="0.5" y="0.5" width="10.5" height="11.5" rx="1" fill="#f4f5f7" stroke="#3b424f" stroke-width="1.1"/><rect x="2.3" y="2.3" width="3.4" height="4" fill="#24529f"/><rect x="6.6" y="2.3" width="1" height="4" fill="#8e95a3"/><rect x="8.3" y="2.3" width="1" height="4" fill="#8e95a3"/><path d="M3 9.2H8.5M4.5 8L3 9.2L4.5 10.4" stroke="#3b424f" stroke-width="0.9" fill="none"/></g><path d="M1164.5 57V73" stroke="#a0a0a0" stroke-width="1"/><path d="M1165.5 57V73" stroke="#fff" stroke-width="1"/><defs><linearGradient id="gf" x1="0" y1="0" x2="0" y2="1"><stop offset="0" stop-color="#dcdfe5"/><stop offset="0.6" stop-color="#f2f3f5"/><stop offset="1" stop-color="#c4c8d0"/></linearGradient><radialGradient id="gb" cx="0.4" cy="0.35" r="0.7"><stop offset="0" stop-color="#fff6d0"/><stop offset="1" stop-color="#f2a82a"/></radialGradient></defs><path d="M1171.5 69.5V53.5H1176L1177 52.5H1184L1185 53.5H1192.5V69.5Z" fill="url(#gf)" stroke="#3b424f" stroke-width="1.2" stroke-linejoin="round"/><path d="M1172 57H1192" stroke="#3b424f" stroke-width="0.8"/><rect x="1172.3" y="54.2" width="3" height="2.4" fill="#8e95a3"/><rect x="1186" y="54.2" width="6" height="2.4" fill="#8e95a3"/><circle cx="1191" cy="66.5" r="3.9" fill="url(#gb)" stroke="#d08a20" stroke-width="0.8"/><rect x="1189.4" y="70.2" width="3.2" height="3.6" rx="0.8" fill="#e4e6ea" stroke="#6a7080" stroke-width="0.7"/><rect x="1203.3" y="52.6" width="23" height="21" rx="1" fill="#f2f3f5" stroke="#3b424f" stroke-width="1.2"/><rect x="1203.3" y="52.6" width="23" height="2" fill="#3b424f"/><path d="M1209.5 54.6V73.4" stroke="#3b424f" stroke-width="1"/><path d="M1205 57.5H1207.5M1205 60.5H1207.5M1205 63.5H1207.5M1205 66.5H1207.5M1205 69.5H1207.5" stroke="#3b424f" stroke-width="1"/><path d="M1210 60.3H1226M1210 66.5H1226M1210 70.5H1226" stroke="#c4c8d0" stroke-width="0.8"/><path d="M1210.5 66C1213.5 52 1216.5 52 1219 62S1223.5 70 1226 66" fill="none" stroke="#3b424f" stroke-width="1.1"/><rect x="1235.5" y="52.6" width="22" height="21" rx="1" fill="#f2f3f5" stroke="#3b424f" stroke-width="1.2"/><rect x="1238" y="55" width="17" height="4" fill="#fafafa" stroke="#3b424f" stroke-width="1"/><rect x="1238" y="67.5" width="17" height="4" fill="#8e95a3" stroke="#3b424f" stroke-width="1"/><path d="M1246.5 59V64" stroke="#3b424f" stroke-width="1.2"/><polygon points="1243.2,63.2 1249.8,63.2 1246.5,67" fill="#3b424f"/><path d="M1266.5 57V73" stroke="#a0a0a0" stroke-width="1"/><path d="M1267.5 57V73" stroke="#fff" stroke-width="1"/><defs><pattern id="chk" width="8" height="8" patternUnits="userSpaceOnUse" patternTransform="rotate(15)"><rect width="8" height="8" fill="#fafafb"/><rect width="4" height="4" fill="#7c8492"/><rect x="4" y="4" width="4" height="4" fill="#7c8492"/></pattern><radialGradient id="gs" cx="0.35" cy="0.3" r="0.8"><stop offset="0" stop-color="#fff" stop-opacity="0.45"/><stop offset="1" stop-color="#444" stop-opacity="0.2"/></radialGradient></defs><circle cx="1284" cy="63" r="10.6" fill="url(#chk)" stroke="#6a7080" stroke-width="0.9"/><circle cx="1284" cy="63" r="10.6" fill="url(#gs)"/><g transform="translate(1286.5,62.5)"><rect x="0.5" y="0.5" width="10.5" height="11.5" rx="1" fill="#f4f5f7" stroke="#3b424f" stroke-width="1.1"/><rect x="2.3" y="2.3" width="3.4" height="4" fill="#24529f"/><rect x="6.6" y="2.3" width="1" height="4" fill="#8e95a3"/><rect x="8.3" y="2.3" width="1" height="4" fill="#8e95a3"/><path d="M3 9.2H8.5M4.5 8L3 9.2L4.5 10.4" stroke="#3b424f" stroke-width="0.9" fill="none"/></g><polygon points="1296,78 1299,78 1299,75" fill="#222"/><path d="M1304.5 57V73" stroke="#a0a0a0" stroke-width="1"/><path d="M1305.5 57V73" stroke="#fff" stroke-width="1"/><g transform="translate(1311.5,52.5) scale(0.95)"><defs><linearGradient id="gt1311" x1="0" y1="0" x2="0" y2="1"><stop offset="0" stop-color="#fafbfc"/><stop offset="1" stop-color="#b4bac6"/></linearGradient></defs><path d="M0.5 4.5Q3 5 5 8.5" fill="none" stroke="#3b424f" stroke-width="1.1"/><path d="M0.5 4.5L6 5.5L5.5 9Z" fill="#e4e7ec" stroke="#3b424f" stroke-width="0.9" stroke-linejoin="round"/><path d="M18 6Q23.5 3.5 22 8Q20.5 11 17.5 12" fill="none" stroke="#3b424f" stroke-width="1.2"/><path d="M5.5 6Q4 13 8.5 15.5H16Q20.5 13 19 6Q12 3 5.5 6Z" fill="url(#gt1311)" stroke="#3b424f" stroke-width="1.1"/><path d="M7.5 4.8Q12 2.6 17 4.8" fill="none" stroke="#3b424f" stroke-width="1.1"/><circle cx="12.2" cy="2.3" r="1.4" fill="#3b424f"/></g><g transform="translate(1324.5,62.5)"><rect x="0.5" y="0.5" width="10.5" height="11.5" rx="1" fill="#f4f5f7" stroke="#3b424f" stroke-width="1.1"/><rect x="2.3" y="2.3" width="3.4" height="4" fill="#24529f"/><rect x="6.6" y="2.3" width="1" height="4" fill="#8e95a3"/><rect x="8.3" y="2.3" width="1" height="4" fill="#8e95a3"/><path d="M3 9.2H8.5M4.5 8L3 9.2L4.5 10.4" stroke="#3b424f" stroke-width="0.9" fill="none"/></g><rect x="1343.6" y="52.8" width="23" height="21" rx="1" fill="#e6e8ec" stroke="#3b424f" stroke-width="1.2"/><rect x="1343.6" y="52.8" width="23" height="2.2" fill="#3b424f"/><g transform="translate(1345,58.5) scale(0.95)"><defs><linearGradient id="gt1345" x1="0" y1="0" x2="0" y2="1"><stop offset="0" stop-color="#fafbfc"/><stop offset="1" stop-color="#b4bac6"/></linearGradient></defs><path d="M0.5 4.5Q3 5 5 8.5" fill="none" stroke="#3b424f" stroke-width="1.1"/><path d="M0.5 4.5L6 5.5L5.5 9Z" fill="#e4e7ec" stroke="#3b424f" stroke-width="0.9" stroke-linejoin="round"/><path d="M18 6Q23.5 3.5 22 8Q20.5 11 17.5 12" fill="none" stroke="#3b424f" stroke-width="1.2"/><path d="M5.5 6Q4 13 8.5 15.5H16Q20.5 13 19 6Q12 3 5.5 6Z" fill="url(#gt1345)" stroke="#3b424f" stroke-width="1.1"/><path d="M7.5 4.8Q12 2.6 17 4.8" fill="none" stroke="#3b424f" stroke-width="1.1"/><circle cx="12.2" cy="2.3" r="1.4" fill="#3b424f"/></g><g transform="translate(1376,55.5) scale(1)"><defs><linearGradient id="gt1376" x1="0" y1="0" x2="0" y2="1"><stop offset="0" stop-color="#fafbfc"/><stop offset="1" stop-color="#b4bac6"/></linearGradient></defs><path d="M0.5 4.5Q3 5 5 8.5" fill="none" stroke="#3b424f" stroke-width="1.1"/><path d="M0.5 4.5L6 5.5L5.5 9Z" fill="#e4e7ec" stroke="#3b424f" stroke-width="0.9" stroke-linejoin="round"/><path d="M18 6Q23.5 3.5 22 8Q20.5 11 17.5 12" fill="none" stroke="#3b424f" stroke-width="1.2"/><path d="M5.5 6Q4 13 8.5 15.5H16Q20.5 13 19 6Q12 3 5.5 6Z" fill="url(#gt1376)" stroke="#3b424f" stroke-width="1.1"/><path d="M7.5 4.8Q12 2.6 17 4.8" fill="none" stroke="#3b424f" stroke-width="1.1"/><circle cx="12.2" cy="2.3" r="1.4" fill="#3b424f"/></g><polygon points="1397,78 1400,78 1400,75" fill="#222"/><path d="M1430.5 53V67M1434.5 53V67M1438.5 53V67M1427 56.5H1441M1427 60.5H1441M1427 64.5H1441" stroke="#3b424f" stroke-width="1.2"/><g transform="translate(1438.5,64)"><path d="M0 8.3V3.3L2.8 0H7.2L10 3.3V8.3H6.4V5.2Q5 3.6 3.6 5.2V8.3Z" fill="#a81414"/><path d="M1.8 8V4L3.7 1.8H6.3L8.2 4V8" fill="none" stroke="#f2a4a4" stroke-width="1.2"/><path d="M0.4 8H3.3V11Q3.3 11.7 2.6 11.7H1.1Q0.4 11.7 0.4 11Z" fill="#fff" stroke="#4a5568" stroke-width="0.8"/><path d="M6.7 8H9.6V11Q9.6 11.7 8.9 11.7H7.4Q6.7 11.7 6.7 11Z" fill="#fff" stroke="#4a5568" stroke-width="0.8"/></g><path d="M1465.5 53V66M1459 59.5H1472" stroke="#d01018" stroke-width="1.1"/><path d="M1465.5 56.5L1468.5 59.5L1465.5 62.5L1462.5 59.5Z" fill="#d01018"/><g transform="translate(1470.5,64)"><path d="M0 8.3V3.3L2.8 0H7.2L10 3.3V8.3H6.4V5.2Q5 3.6 3.6 5.2V8.3Z" fill="#a81414"/><path d="M1.8 8V4L3.7 1.8H6.3L8.2 4V8" fill="none" stroke="#f2a4a4" stroke-width="1.2"/><path d="M0.4 8H3.3V11Q3.3 11.7 2.6 11.7H1.1Q0.4 11.7 0.4 11Z" fill="#fff" stroke="#4a5568" stroke-width="0.8"/><path d="M6.7 8H9.6V11Q9.6 11.7 8.9 11.7H7.4Q6.7 11.7 6.7 11Z" fill="#fff" stroke="#4a5568" stroke-width="0.8"/></g><rect x="1496.5" y="58.5" width="4" height="4" fill="#fff" stroke="#3b424f" stroke-width="1"/><g transform="translate(1504,64)"><path d="M0 8.3V3.3L2.8 0H7.2L10 3.3V8.3H6.4V5.2Q5 3.6 3.6 5.2V8.3Z" fill="#a81414"/><path d="M1.8 8V4L3.7 1.8H6.3L8.2 4V8" fill="none" stroke="#f2a4a4" stroke-width="1.2"/><path d="M0.4 8H3.3V11Q3.3 11.7 2.6 11.7H1.1Q0.4 11.7 0.4 11Z" fill="#fff" stroke="#4a5568" stroke-width="0.8"/><path d="M6.7 8H9.6V11Q9.6 11.7 8.9 11.7H7.4Q6.7 11.7 6.7 11Z" fill="#fff" stroke="#4a5568" stroke-width="0.8"/></g><path d="M1525 58.5H1541" stroke="#3b424f" stroke-width="1.1"/><rect x="1540.5" y="56.5" width="4" height="4" fill="#fff" stroke="#3b424f" stroke-width="1"/><g transform="translate(1536,64)"><path d="M0 8.3V3.3L2.8 0H7.2L10 3.3V8.3H6.4V5.2Q5 3.6 3.6 5.2V8.3Z" fill="#a81414"/><path d="M1.8 8V4L3.7 1.8H6.3L8.2 4V8" fill="none" stroke="#f2a4a4" stroke-width="1.2"/><path d="M0.4 8H3.3V11Q3.3 11.7 2.6 11.7H1.1Q0.4 11.7 0.4 11Z" fill="#fff" stroke="#4a5568" stroke-width="0.8"/><path d="M6.7 8H9.6V11Q9.6 11.7 8.9 11.7H7.4Q6.7 11.7 6.7 11Z" fill="#fff" stroke="#4a5568" stroke-width="0.8"/></g><path d="M1557 58.5H1578" stroke="#3b424f" stroke-width="1.1"/><rect x="1565.5" y="56.5" width="4" height="4" fill="#fff" stroke="#3b424f" stroke-width="1"/><g transform="translate(1568,64)"><path d="M0 8.3V3.3L2.8 0H7.2L10 3.3V8.3H6.4V5.2Q5 3.6 3.6 5.2V8.3Z" fill="#a81414"/><path d="M1.8 8V4L3.7 1.8H6.3L8.2 4V8" fill="none" stroke="#f2a4a4" stroke-width="1.2"/><path d="M0.4 8H3.3V11Q3.3 11.7 2.6 11.7H1.1Q0.4 11.7 0.4 11Z" fill="#fff" stroke="#4a5568" stroke-width="0.8"/><path d="M6.7 8H9.6V11Q9.6 11.7 8.9 11.7H7.4Q6.7 11.7 6.7 11Z" fill="#fff" stroke="#4a5568" stroke-width="0.8"/></g><path d="M1588.5 61.5L1602.5 54.5L1597.5 65.5Z" fill="none" stroke="#3b424f" stroke-width="1.1" stroke-linejoin="round"/><g transform="translate(1599,64)"><path d="M0 8.3V3.3L2.8 0H7.2L10 3.3V8.3H6.4V5.2Q5 3.6 3.6 5.2V8.3Z" fill="#a81414"/><path d="M1.8 8V4L3.7 1.8H6.3L8.2 4V8" fill="none" stroke="#f2a4a4" stroke-width="1.2"/><path d="M0.4 8H3.3V11Q3.3 11.7 2.6 11.7H1.1Q0.4 11.7 0.4 11Z" fill="#fff" stroke="#4a5568" stroke-width="0.8"/><path d="M6.7 8H9.6V11Q9.6 11.7 8.9 11.7H7.4Q6.7 11.7 6.7 11Z" fill="#fff" stroke="#4a5568" stroke-width="0.8"/></g><path d="M1620.5 61.5L1634.5 54.5L1629.5 65.5Z" fill="none" stroke="#3b424f" stroke-width="1.1" stroke-linejoin="round"/><g transform="translate(1631,64)"><path d="M0 8.3V3.3L2.8 0H7.2L10 3.3V8.3H6.4V5.2Q5 3.6 3.6 5.2V8.3Z" fill="#a81414"/><path d="M1.8 8V4L3.7 1.8H6.3L8.2 4V8" fill="none" stroke="#f2a4a4" stroke-width="1.2"/><path d="M0.4 8H3.3V11Q3.3 11.7 2.6 11.7H1.1Q0.4 11.7 0.4 11Z" fill="#fff" stroke="#4a5568" stroke-width="0.8"/><path d="M6.7 8H9.6V11Q9.6 11.7 8.9 11.7H7.4Q6.7 11.7 6.7 11Z" fill="#fff" stroke="#4a5568" stroke-width="0.8"/></g><path d="M1649.5 57V73" stroke="#a0a0a0" stroke-width="1"/><path d="M1650.5 57V73" stroke="#fff" stroke-width="1"/><g stroke="#3b424f" stroke-width="2.6" stroke-linecap="round"><path d="M1664 53.5V66M1658.6 56.6L1669.4 62.9M1658.6 62.9L1669.4 56.6"/></g><g stroke="#fff" stroke-width="1.1" stroke-linecap="round"><path d="M1664 53.5V66M1658.6 56.6L1669.4 62.9M1658.6 62.9L1669.4 56.6"/></g><circle cx="1664" cy="59.8" r="0.9" fill="#111"/><g transform="translate(1670,64)"><path d="M0 8.3V3.3L2.8 0H7.2L10 3.3V8.3H6.4V5.2Q5 3.6 3.6 5.2V8.3Z" fill="#a81414"/><path d="M1.8 8V4L3.7 1.8H6.3L8.2 4V8" fill="none" stroke="#f2a4a4" stroke-width="1.2"/><path d="M0.4 8H3.3V11Q3.3 11.7 2.6 11.7H1.1Q0.4 11.7 0.4 11Z" fill="#fff" stroke="#4a5568" stroke-width="0.8"/><path d="M6.7 8H9.6V11Q9.6 11.7 8.9 11.7H7.4Q6.7 11.7 6.7 11Z" fill="#fff" stroke="#4a5568" stroke-width="0.8"/></g><g transform="translate(1702,64)"><path d="M0 8.3V3.3L2.8 0H7.2L10 3.3V8.3H6.4V5.2Q5 3.6 3.6 5.2V8.3Z" fill="#a81414"/><path d="M1.8 8V4L3.7 1.8H6.3L8.2 4V8" fill="none" stroke="#f2a4a4" stroke-width="1.2"/><path d="M0.4 8H3.3V11Q3.3 11.7 2.6 11.7H1.1Q0.4 11.7 0.4 11Z" fill="#fff" stroke="#4a5568" stroke-width="0.8"/><path d="M6.7 8H9.6V11Q9.6 11.7 8.9 11.7H7.4Q6.7 11.7 6.7 11Z" fill="#fff" stroke="#4a5568" stroke-width="0.8"/></g></svg>
<div id="vp" class="a"><div id="vpi" class="a"></div><svg width="1696" height="861" viewBox="0 0 1696 861" style="left:0;top:0"><path d="M513.8 604.6L462.3 475.1M513.8 604.6L753.3 553.4M531.5 600.8L478.5 471.9M509.8 594.5L747.8 544.0M549.1 597.0L494.7 468.8M505.9 584.6L742.5 534.7M566.6 593.3L510.8 465.7M502.0 574.8L737.2 525.6M584.0 589.6L526.8 462.6M498.1 565.1L731.9 516.6M601.3 585.9L542.8 459.5M494.3 555.6L726.8 507.7M618.5 582.2L558.7 456.4M490.6 546.2L721.7 498.9M635.7 578.5L574.5 453.4M486.9 536.9L716.6 490.2M652.7 574.9L590.2 450.3M483.2 527.7L711.7 481.6M669.7 571.2L605.9 447.3M479.6 518.7L706.8 473.1M686.6 567.6L621.5 444.3M476.0 509.7L701.9 464.8M703.4 564.0L637.0 441.3M472.5 500.9L697.1 456.5M720.1 560.5L652.4 438.3M469.1 492.2L692.4 448.4M736.7 556.9L667.8 435.3M465.6 483.6L687.7 440.3M753.3 553.4L683.1 432.3M462.3 475.1L683.1 432.3" stroke="#a2a2a2" stroke-width="1" fill="none"/><path d="M635.7 578.5L574.5 453.4M486.9 536.9L716.6 490.2" stroke="#000" stroke-width="1.2" fill="none"/><polygon points="387.0,344.4 555.3,314.7 600.0,400.4 610.8,547.6 440.3,582.8 407.0,486.0" fill="#628b24"/><polygon points="387.0,344.4 420.4,433.7 440.3,582.8 407.0,486.0" fill="#5d8723" stroke="#5d8723" stroke-width="0.5"/><polygon points="420.4,433.7 600.0,400.4 610.8,547.6 440.3,582.8" fill="#628b24"/><polygon points="387.0,344.4 555.3,314.7 600.0,400.4 420.4,433.7" fill="#76a72a" stroke="#76a72a" stroke-width="0.5"/><polygon points="718.0,288.3 871.5,262.2 932.0,335.6 928.8,478.3 773.2,511.1 723.7,428.2" fill="#628b24"/><polygon points="718.0,288.3 770.0,366.3 773.2,511.1 723.7,428.2" fill="#5d8723" stroke="#5d8723" stroke-width="0.5"/><polygon points="770.0,366.3 932.0,335.6 928.8,478.3 773.2,511.1" fill="#628b24"/><polygon points="718.0,288.3 871.5,262.2 932.0,335.6 770.0,366.3" fill="#76a72a" stroke="#76a72a" stroke-width="0.5"/><polygon points="1017.0,236.4 1157.3,212.2 1234.0,280.3 1218.0,418.0 1077.0,447.0 1011.7,373.0" fill="#628b24"/><polygon points="1017.0,236.4 1086.5,307.0 1077.0,447.0 1011.7,373.0" fill="#5d8723" stroke="#5d8723" stroke-width="0.5"/><polygon points="1086.5,307.0 1234.0,280.3 1218.0,418.0 1077.0,447.0" fill="#628b24"/><polygon points="1017.0,236.4 1157.3,212.2 1234.0,280.3 1086.5,307.0" fill="#76a72a" stroke="#76a72a" stroke-width="0.5"/><defs><radialGradient id="gvc" cx="0.5" cy="0.45" r="0.6"><stop offset="0" stop-color="#3c3c3c"/><stop offset="1" stop-color="#5a5a5a"/></radialGradient></defs><ellipse cx="1639.6" cy="73" rx="35" ry="20.5" fill="#8d9197"/><ellipse cx="1639.6" cy="72.5" rx="28.5" ry="15.8" fill="url(#gvc)" stroke="#6a6e75" stroke-width="1"/><ellipse cx="1639.6" cy="72.7" rx="26.5" ry="14.2" fill="none" stroke="#7e838b" stroke-width="0.8"/><polygon points="1622.2,40.3 1633.6,53.0 1631.9,78.1 1624.2,63.0" fill="#878b92"/><polygon points="1633.6,53.0 1658.8,48.6 1657.3,71.8 1631.9,78.1" fill="#8f939a"/><polygon points="1622.2,40.3 1648.5,36.2 1658.8,48.6 1633.6,53.0" fill="#9a9ea5"/><ellipse cx="1645" cy="53.4" rx="8" ry="2.6" transform="rotate(-9 1645 53.4)" fill="#a4a8af" opacity="0.55"/><text x="1639" y="67.5" font-size="11" font-family="Liberation Sans,IPAGothic,sans-serif" fill="#566072" transform="rotate(-9 1645 63)">前</text><text x="0" y="0" font-size="9" font-family="Liberation Sans,IPAGothic,sans-serif" fill="#566072" transform="translate(1637.5 47.5) rotate(-9) scale(1 0.62)">上</text><text font-size="9" font-family="Liberation Sans,IPAGothic,sans-serif" fill="#566072" transform="translate(1624.5 57) skewY(58) scale(0.42 0.9)">左</text><text font-size="9" font-family="Liberation Sans,IPAGothic,sans-serif" fill="#566072" opacity="0.8" transform="translate(1600.5 76.5) rotate(28) scale(1 0.7)">西</text><text font-size="9" font-family="Liberation Sans,IPAGothic,sans-serif" fill="#566072" opacity="0.8" transform="translate(1650.5 96) rotate(-14) scale(1 0.7)">南</text><text font-size="9" font-family="Liberation Sans,IPAGothic,sans-serif" fill="#566072" opacity="0.8" transform="translate(1669 68) rotate(-60) scale(1 0.7)">東</text><path d="M27.5 833.1L27.5 813.2" stroke="#0a0adc" stroke-width="1.2"/><path d="M27.5 833.1L50.8 829.3" stroke="#dc0a0a" stroke-width="1.2"/><path d="M27.5 833.1L20.2 821.3" stroke="#14a014" stroke-width="1.2"/><text x="26.5" y="810" font-family="Liberation Sans,sans-serif" font-size="11" fill="#0a0adc">z</text><text x="50" y="826" font-family="Liberation Sans,sans-serif" font-size="11" fill="#dc0a0a">x</text><text x="18.5" y="817" font-family="Liberation Sans,sans-serif" font-size="11" fill="#14a014">y</text></svg><div class="a" style="left:5.5px;top:6.5px;font-size:12px;color:#d4d4d4;white-space:pre;line-height:15px;font-family:'Liberation Mono','IPAGothic',monospace;">[+][<span style="display:inline-block;width:28.37px;vertical-align:top"><span style="display:inline-block;transform:scaleX(0.788);transform-origin:0 50%;-webkit-text-stroke:0.18px">パース</span></span>][<span style="display:inline-block;width:66.20px;vertical-align:top"><span style="display:inline-block;transform:scaleX(0.788);transform-origin:0 50%;-webkit-text-stroke:0.18px">シェーディング</span></span>]</div></div>
<div id="rp" class="a"></div><div class="a" style="left:1736px;top:111px;width:183px;height:1px;background:#a4a4a4;"></div><div class="a tab" style="left:1767.5px;top:87px;width:28.5px;height:24px"></div><div class="a tab" style="left:1796.5px;top:87px;width:28.5px;height:24px"></div><div class="a tab" style="left:1825.5px;top:87px;width:28.5px;height:24px"></div><div class="a tab" style="left:1854.5px;top:87px;width:28.5px;height:24px"></div><div class="a tab" style="left:1883.5px;top:87px;width:28.5px;height:24px"></div><div class="a tab" style="left:1738px;top:86px;width:30px;height:26px;background:#f0f0f0"></div><svg style="left:0;top:0" width="1919" height="180" viewBox="0 0 1919 180"><g transform="translate(1752.5,98.5)"><path d="M2.5 0.0L8.8 0.0" stroke="#c83c28" stroke-width="1.5"/><path d="M2.3 1.0L5.7 2.4" stroke="#d89048" stroke-width="1.2"/><path d="M1.8 1.8L5.1 5.1" stroke="#cc4a2c" stroke-width="1.4"/><path d="M1.0 2.3L2.4 5.7" stroke="#d89048" stroke-width="1.2"/><path d="M0.0 2.5L0.0 8.8" stroke="#c83c28" stroke-width="1.5"/><path d="M-1.0 2.3L-2.4 5.7" stroke="#d89048" stroke-width="1.2"/><path d="M-1.8 1.8L-5.1 5.1" stroke="#cc4a2c" stroke-width="1.4"/><path d="M-2.3 1.0L-5.7 2.4" stroke="#d89048" stroke-width="1.2"/><path d="M-2.5 0.0L-8.8 0.0" stroke="#c83c28" stroke-width="1.5"/><path d="M-2.3 -1.0L-5.7 -2.4" stroke="#d89048" stroke-width="1.2"/><path d="M-1.8 -1.8L-5.1 -5.1" stroke="#cc4a2c" stroke-width="1.4"/><path d="M-1.0 -2.3L-2.4 -5.7" stroke="#d89048" stroke-width="1.2"/><path d="M-0.0 -2.5L-0.0 -8.8" stroke="#c83c28" stroke-width="1.5"/><path d="M1.0 -2.3L2.4 -5.7" stroke="#d89048" stroke-width="1.2"/><path d="M1.8 -1.8L5.1 -5.1" stroke="#cc4a2c" stroke-width="1.4"/><path d="M2.3 -1.0L5.7 -2.4" stroke="#d89048" stroke-width="1.2"/><circle r="4.8" fill="#e39a3c" opacity="0.9"/><circle r="3.2" fill="#f8d268"/><circle r="1.7" fill="#fffbe4"/></g><rect x="1773.5" y="90.5" width="15.5" height="16.5" fill="none" stroke="#3b424f" stroke-width="1"/><path d="M1776 107Q1776 93 1789 92V98Q1781.5 99 1781.5 107Z" fill="#7ab4e0" stroke="#2a6ab8" stroke-width="1"/><path d="M1778.7 107Q1778.7 96 1789 95" fill="none" stroke="#d8ecfa" stroke-width="1"/><rect x="1772" y="89" width="3" height="3" fill="#fff" stroke="#3b424f" stroke-width="0.9"/><rect x="1787.7" y="105.3" width="3" height="3" fill="#fff" stroke="#3b424f" stroke-width="0.9"/><rect x="1806" y="89.7" width="9.6" height="8.6" fill="#dfe2e8" stroke="#3b424f" stroke-width="1.1"/><path d="M1810.8 98.5V103.5M1803 103.5L1807.5 99.5H1814L1818.5 103.5" fill="none" stroke="#3b424f" stroke-width="1"/><rect x="1801.5" y="103.6" width="4.2" height="4.2" fill="#fff" stroke="#3b424f" stroke-width="1.1"/><rect x="1808.6" y="103.6" width="4.2" height="4.2" fill="#fff" stroke="#3b424f" stroke-width="1.1"/><rect x="1815.7" y="103.6" width="4.2" height="4.2" fill="#fff" stroke="#3b424f" stroke-width="1.1"/><circle cx="1842.5" cy="98.5" r="7.3" fill="#f4f5f7" stroke="#262a33" stroke-width="1.7"/><circle cx="1842.5" cy="98.5" r="4.3" fill="none" stroke="#3b424f" stroke-width="1.1"/><circle cx="1842.5" cy="98.5" r="1.2" fill="#fff" stroke="#3b424f" stroke-width="0.9"/><path d="M1832.5 92Q1829.5 98.5 1832.5 105M1830.3 93.5Q1828 98.5 1830.3 103.5" fill="none" stroke="#888" stroke-width="0.9"/><rect x="1859.5" y="90.5" width="18.5" height="13" fill="#dfe2e8" stroke="#3b424f" stroke-width="1.2"/><path d="M1861 106.5H1876.5" stroke="#3b424f" stroke-width="1.1"/><rect x="1866" y="103.8" width="5.5" height="1.8" fill="#aab0bc"/><path d="M1865.5 95L1867 93.5H1873V99L1871.5 100.5H1865.5Z" fill="#f2f3f5" stroke="#3b424f" stroke-width="1"/><path d="M1889.5 105.5L1900.5 93.5" stroke="#4a2a20" stroke-width="3.2" stroke-linecap="round"/><path d="M1889.5 105.5L1900.5 93.5" stroke="#c87860" stroke-width="1.6" stroke-linecap="round"/><path d="M1895.5 92.5Q1901.5 88.5 1906.5 94L1904.8 96.5Q1903 93.8 1900.8 94.8L1898.3 95.8Z" fill="#3b424f" stroke="#22262e" stroke-width="0.8"/></svg><div class="a" style="left:1771px;top:119px;width:24px;height:23px;box-sizing:border-box;border:1px solid #c0c0c0;border-right-color:#fdfdfd;border-bottom-color:#fdfdfd;background:#f6f6f6;"></div><div class="a" style="left:1773px;top:121px;width:20px;height:19px;background:#efcb5b;"></div><svg style="left:0;top:0" width="1919" height="180" viewBox="0 0 1919 180"><defs><radialGradient id="gsp" cx="0.4" cy="0.35" r="0.7"><stop offset="0" stop-color="#ffffff"/><stop offset="1" stop-color="#c4c8d0"/></radialGradient></defs><circle cx="1759" cy="131" r="7.6" fill="url(#gsp)" stroke="#3b424f" stroke-width="1.1"/><circle cx="1781.5" cy="129.5" r="5.6" fill="#e8eaee" stroke="#3b424f" stroke-width="1.1"/><rect x="1783.2" y="131.2" width="8" height="7.6" fill="#dfe2e8" stroke="#3b424f" stroke-width="1.1"/><path d="M1810.2 123.6L1813.6 124.6L1813.2 128.5L1812.6 136.6Q1805 137.5 1800.6 130.2Z" fill="#eef0f3" stroke="#3b424f" stroke-width="1" stroke-linejoin="round"/><ellipse cx="1806.6" cy="133.3" rx="6.3" ry="2.5" transform="rotate(31 1806.6 133.3)" fill="#fff4bc" stroke="#3b424f" stroke-width="0.9"/><path d="M1810.5 124.5L1813 125.3" stroke="#fff" stroke-width="1"/><rect x="1824" y="123.5" width="11" height="6.5" rx="3" fill="#f2f3f5" stroke="#3b424f" stroke-width="1.1"/><rect x="1826.3" y="125.5" width="2" height="2" fill="#3b424f"/><rect x="1830.7" y="125.5" width="2" height="2" fill="#3b424f"/><rect x="1825" y="130.5" width="8.5" height="6" rx="1" fill="#f2f3f5" stroke="#3b424f" stroke-width="1.1"/><path d="M1834 133.5L1838.5 131V137L1834 134.5Z" fill="#3b424f"/><path d="M1824.5 138.5H1833" stroke="#3b424f" stroke-width="1"/><path d="M1828.5 136.5V138.5" stroke="#3b424f" stroke-width="1.5"/><path d="M1847.5 135.5V126.5Q1847.5 125.5 1848.5 125.5H1856Q1859.5 126.5 1859.5 135.5Z" fill="#f2f3f5" stroke="#3b424f" stroke-width="1.1"/><rect x="1850" y="127.8" width="5.5" height="5" rx="1.6" fill="#dfe2e8" stroke="#3b424f" stroke-width="0.9"/><path d="M1859.5 135.5H1862.5V136.8" fill="none" stroke="#3b424f" stroke-width="1"/><path d="M1871.3 126q2.7-2.8 5.4 0t5.4 0t5.4 0" fill="none" stroke="#262a33" stroke-width="1.4"/><path d="M1871.3 130.3q2.7-2.8 5.4 0t5.4 0t5.4 0" fill="none" stroke="#262a33" stroke-width="1.4"/><path d="M1871.3 134.6q2.7-2.8 5.4 0t5.4 0t5.4 0" fill="none" stroke="#262a33" stroke-width="1.4"/><g transform="translate(1900.5,127.5)"><g stroke="#6a6a6a" stroke-width="1.3"><path d="M0 0L4.1 0.8"/><path d="M0 0L2.3 3.5"/><path d="M0 0L-0.8 4.1"/><path d="M0 0L-3.5 2.3"/><path d="M0 0L-4.1 -0.8"/><path d="M0 0L-2.3 -3.5"/><path d="M0 0L0.8 -4.1"/><path d="M0 0L3.5 -2.3"/></g><circle r="2.7" fill="#6a6a6a"/><circle r="1.1" fill="#f0f0f0"/></g><g transform="translate(1905.5,134)"><g stroke="#222" stroke-width="1.3"><path d="M0 0L4.1 0.8"/><path d="M0 0L2.3 3.5"/><path d="M0 0L-0.8 4.1"/><path d="M0 0L-3.5 2.3"/><path d="M0 0L-4.1 -0.8"/><path d="M0 0L-2.3 -3.5"/><path d="M0 0L0.8 -4.1"/><path d="M0 0L3.5 -2.3"/></g><circle r="2.7" fill="#222"/><circle r="1.1" fill="#f0f0f0"/></g></svg><div class="a" style="left:1747px;top:148px;width:164px;height:21px;box-sizing:border-box;border:1px solid #8a8a8a;border-right-color:#fbfbfb;border-bottom-color:#fbfbfb;box-shadow:inset 1px 1px 0 #b0b0b0;background:linear-gradient(#f4f4f4,#e8e8e8 50%,#d2d2d2);"></div><div class="a" style="left:1750.5px;top:151px;font-size:12px;color:#000;white-space:pre;line-height:15px;"><span style="display:inline-block;width:44.00px;vertical-align:top"><span style="display:inline-block;transform:scaleX(0.733);transform-origin:0 50%;-webkit-text-stroke:0.18px">スプライン</span></span></div><svg style="left:1899px;top:157px" width="8" height="5" viewBox="0 0 8 5"><polygon points="0,0 7.5,0 3.75,4.5" fill="#000"/></svg><div class="a" style="left:1740px;top:176px;width:173px;height:1px;background:#a8a8a8;"></div><div class="a" style="left:1740px;top:177px;width:173px;height:1px;background:#fff;"></div><div class="a" style="left:1913px;top:177px;width:1px;height:807px;background:#fdfdfd;"></div><div class="a" style="left:1740px;top:983px;width:174px;height:1px;background:#fdfdfd;"></div><div class="a" style="left:1737px;top:989px;width:182px;height:1px;background:#a8a8a8;"></div><div class="a" style="left:1740px;top:177px;width:1px;height:806px;background:#e0e0e0;"></div><div class="a fr" style="left:1744px;top:189px;width:165px;height:177px"></div><div class="a hd" style="left:1748px;top:181px;width:158px;height:16px"></div><div class="a" style="left:1754px;top:188px;width:7px;height:1px;background:#000;"></div><div class="a" style="left:1786.5px;top:181.5px;font-size:12px;color:#000;white-space:pre;line-height:15px;"><span style="display:inline-block;width:51.77px;vertical-align:top"><span style="display:inline-block;transform:scaleX(0.719);transform-origin:0 50%;-webkit-text-stroke:0.18px">オブジェクト</span></span> <span style="display:inline-block;width:25.89px;vertical-align:top"><span style="display:inline-block;transform:scaleX(0.719);transform-origin:0 50%;-webkit-text-stroke:0.18px">タイプ</span></span></div><div class="a" style="left:1758px;top:201px;width:12px;height:12px;box-sizing:border-box;border:1px solid #a0a0a0;border-right-color:#fff;border-bottom-color:#fff;background:#fff;box-shadow:inset 1px 1px 0 #696969,inset -1px -1px 0 #e3e3e3;"></div><div class="a" style="left:1796px;top:199.5px;font-size:12px;color:#000;white-space:pre;line-height:15px;"><span style="display:inline-block;width:25.14px;vertical-align:top"><span style="display:inline-block;transform:scaleX(0.698);transform-origin:0 50%;-webkit-text-stroke:0.18px">オート</span></span> <span style="display:inline-block;width:33.52px;vertical-align:top"><span style="display:inline-block;transform:scaleX(0.698);transform-origin:0 50%;-webkit-text-stroke:0.18px">グリッド</span></span></div><div class="a" style="left:1758px;top:219.5px;width:12px;height:12px;box-sizing:border-box;border:1px solid #a0a0a0;border-right-color:#fff;border-bottom-color:#fff;background:#fff;box-shadow:inset 1px 1px 0 #696969,inset -1px -1px 0 #e3e3e3;"></div><svg style="left:1758px;top:219.5px" width="12" height="12" viewBox="0 0 12 12"><path d="M2.8 5.6L5 8L9.3 3.2" fill="none" stroke="#000" stroke-width="1.7"/></svg><div class="a" style="left:1776px;top:215px;width:122px;height:21px;box-sizing:border-box;border:1px solid #9c9c9c;border-right-color:#fff;border-bottom-color:#fff;background:#fafafa;"></div><div class="a" style="left:1778px;top:217px;width:118px;height:17px;background:#efcb5b;"></div><div class="a" style="left:1790.5px;top:219px;font-size:12px;color:#d9d4c4;white-space:pre;line-height:15px;text-shadow:1px 1px 0 #fff;">新規<span style="display:inline-block;width:45.00px;vertical-align:top"><span style="display:inline-block;transform:scaleX(0.750);transform-origin:0 50%;-webkit-text-stroke:0.18px">シェイプの</span></span>開始</div><div class="a bt" style="left:1747px;top:239px;width:79px;height:18px"></div><div class="a" style="left:1772.5px;top:240.5px;font-size:12px;color:#000;white-space:pre;line-height:15px;"><span style="display:inline-block;width:27.00px;vertical-align:top"><span style="display:inline-block;transform:scaleX(0.750);transform-origin:0 50%;-webkit-text-stroke:0.18px">ライン</span></span></div><div class="a bton" style="left:1827.5px;top:239px;width:79px;height:18px"></div><div class="a" style="left:1829.5px;top:241px;width:76px;height:15px;background:#c1fdc1;"></div><div class="a" style="left:1848.5px;top:240.5px;font-size:12px;color:#000;white-space:pre;line-height:15px;letter-spacing:0.00px;">長方形</div><div class="a bt" style="left:1747px;top:260px;width:79px;height:18px"></div><div class="a" style="left:1780px;top:261.5px;font-size:12px;color:#000;white-space:pre;line-height:15px;letter-spacing:0.00px;">円</div><div class="a bt" style="left:1827.5px;top:260px;width:79px;height:18px"></div><div class="a" style="left:1854.5px;top:261.5px;font-size:12px;color:#000;white-space:pre;line-height:15px;letter-spacing:0.00px;">楕円</div><div class="a bt" style="left:1747px;top:281px;width:79px;height:18px"></div><div class="a" style="left:1774px;top:282.5px;font-size:12px;color:#000;white-space:pre;line-height:15px;letter-spacing:0.00px;">円弧</div><div class="a bt" style="left:1827.5px;top:281px;width:79px;height:18px"></div><div class="a" style="left:1847.5px;top:282.5px;font-size:12px;color:#000;white-space:pre;line-height:15px;"><span style="display:inline-block;width:38.00px;vertical-align:top"><span style="display:inline-block;transform:scaleX(0.792);transform-origin:0 50%;-webkit-text-stroke:0.18px">ドーナツ</span></span></div><div class="a bt" style="left:1747px;top:302px;width:79px;height:18px"></div><div class="a" style="left:1763px;top:303.5px;font-size:12px;color:#000;white-space:pre;line-height:15px;letter-spacing:-0.40px;">N 多角形</div><div class="a bt" style="left:1827.5px;top:302px;width:79px;height:18px"></div><div class="a" style="left:1860.5px;top:303.5px;font-size:12px;color:#000;white-space:pre;line-height:15px;letter-spacing:0.00px;">星</div><div class="a bt" style="left:1747px;top:323px;width:79px;height:18px"></div><div class="a" style="left:1774px;top:324.5px;font-size:12px;color:#000;white-space:pre;line-height:15px;letter-spacing:0.00px;">文字</div><div class="a bt" style="left:1827.5px;top:323px;width:79px;height:18px"></div><div class="a" style="left:1851.5px;top:324.5px;font-size:12px;color:#000;white-space:pre;line-height:15px;"><span style="display:inline-block;width:30.00px;vertical-align:top"><span style="display:inline-block;transform:scaleX(0.833);transform-origin:0 50%;-webkit-text-stroke:0.08px">らせん</span></span></div><div class="a bt" style="left:1747px;top:344px;width:79px;height:18px"></div><div class="a" style="left:1773.5px;top:345.5px;font-size:12px;color:#000;white-space:pre;line-height:15px;"><span style="display:inline-block;width:25.00px;vertical-align:top"><span style="display:inline-block;transform:scaleX(0.694);transform-origin:0 50%;-webkit-text-stroke:0.18px">エッグ</span></span></div><div class="a bt" style="left:1827.5px;top:344px;width:79px;height:18px"></div><div class="a" style="left:1837px;top:345.5px;font-size:12px;color:#000;white-space:pre;line-height:15px;">断面<span style="display:inline-block;width:35.00px;vertical-align:top"><span style="display:inline-block;transform:scaleX(0.729);transform-origin:0 50%;-webkit-text-stroke:0.18px">シェイプ</span></span></div><div class="a fr" style="left:1744px;top:381px;width:165px;height:43px"></div><div class="a hd" style="left:1748px;top:373px;width:158px;height:16px"></div><div class="a" style="left:1754px;top:380px;width:7px;height:1px;background:#000;"></div><div class="a" style="left:1797.5px;top:373.5px;font-size:12px;color:#000;white-space:pre;line-height:15px;">名前<span style="display:inline-block;width:35.00px;vertical-align:top"><span style="display:inline-block;transform:scaleX(0.729);transform-origin:0 50%;-webkit-text-stroke:0.18px">とカラー</span></span></div><div class="a inp" style="left:1752.5px;top:397px;width:131px;height:18px"></div><div class="a" style="left:1887px;top:396px;width:17px;height:20px;box-sizing:border-box;border:1px solid #9c9c9c;border-right-color:#fff;border-bottom-color:#fff;background:#c8e6f0;"></div><div class="a" style="left:1744px;top:434px;width:1px;height:10px;background:#a8a8a8;"></div><div class="a" style="left:1745px;top:434px;width:3px;height:1px;background:#a8a8a8;"></div><div class="a" style="left:1908px;top:434px;width:1px;height:10px;background:#a8a8a8;"></div><div class="a" style="left:1906px;top:443px;width:3px;height:1px;background:#a8a8a8;"></div><div class="a hd" style="left:1748px;top:431px;width:158px;height:16px"></div><div class="a" style="left:1754px;top:438px;width:7px;height:1px;background:#000;"></div><div class="a" style="left:1757px;top:435px;width:1px;height:7px;background:#000;"></div><div class="a" style="left:1801px;top:431.5px;font-size:12px;color:#000;white-space:pre;line-height:15px;"><span style="display:inline-block;width:52.00px;vertical-align:top"><span style="display:inline-block;transform:scaleX(0.722);transform-origin:0 50%;-webkit-text-stroke:0.18px">レンダリング</span></span></div><div class="a" style="left:1744px;top:454px;width:1px;height:10px;background:#a8a8a8;"></div><div class="a" style="left:1745px;top:454px;width:3px;height:1px;background:#a8a8a8;"></div><div class="a" style="left:1908px;top:454px;width:1px;height:10px;background:#a8a8a8;"></div><div class="a" style="left:1906px;top:463px;width:3px;height:1px;background:#a8a8a8;"></div><div class="a hd" style="left:1748px;top:451px;width:158px;height:16px"></div><div class="a" style="left:1754px;top:458px;width:7px;height:1px;background:#000;"></div><div class="a" style="left:1757px;top:455px;width:1px;height:7px;background:#000;"></div><div class="a" style="left:1815px;top:451.5px;font-size:12px;color:#000;white-space:pre;line-height:15px;letter-spacing:0.00px;">補間</div><div class="a fr" style="left:1744px;top:479.5px;width:165px;height:34px"></div><div class="a hd" style="left:1748px;top:471px;width:158px;height:16px"></div><div class="a" style="left:1754px;top:478px;width:7px;height:1px;background:#000;"></div><div class="a" style="left:1803px;top:471.5px;font-size:12px;color:#000;white-space:pre;line-height:15px;letter-spacing:0.00px;">作成方法</div><svg style="left:1763px;top:494px" width="12" height="12" viewBox="0 0 12 12"><circle cx="6" cy="6" r="4.6" fill="#fff" stroke="#d8d8d8" stroke-width="1"/><path d="M2.7 9.3A4.6 4.6 0 0 1 9.3 2.7" fill="none" stroke="#707070" stroke-width="1.1"/><circle cx="6" cy="6" r="2.2" fill="#000"/></svg><div class="a" style="left:1780.5px;top:493px;font-size:12px;color:#000;white-space:pre;line-height:15px;"><span style="display:inline-block;width:25.00px;vertical-align:top"><span style="display:inline-block;transform:scaleX(0.694);transform-origin:0 50%;-webkit-text-stroke:0.18px">エッジ</span></span></div><svg style="left:1844px;top:494px" width="12" height="12" viewBox="0 0 12 12"><circle cx="6" cy="6" r="4.6" fill="#fff" stroke="#d8d8d8" stroke-width="1"/><path d="M2.7 9.3A4.6 4.6 0 0 1 9.3 2.7" fill="none" stroke="#707070" stroke-width="1.1"/></svg><div class="a" style="left:1861.5px;top:493px;font-size:12px;color:#000;white-space:pre;line-height:15px;letter-spacing:0.00px;">中心</div><div class="a" style="left:1744px;top:524px;width:1px;height:10px;background:#a8a8a8;"></div><div class="a" style="left:1745px;top:524px;width:3px;height:1px;background:#a8a8a8;"></div><div class="a" style="left:1908px;top:524px;width:1px;height:10px;background:#a8a8a8;"></div><div class="a" style="left:1906px;top:533px;width:3px;height:1px;background:#a8a8a8;"></div><div class="a hd" style="left:1748px;top:521px;width:158px;height:16px"></div><div class="a" style="left:1754px;top:528px;width:7px;height:1px;background:#000;"></div><div class="a" style="left:1757px;top:525px;width:1px;height:7px;background:#000;"></div><div class="a" style="left:1790px;top:521.5px;font-size:12px;color:#000;white-space:pre;line-height:15px;"><span style="display:inline-block;width:50.00px;vertical-align:top"><span style="display:inline-block;transform:scaleX(0.833);transform-origin:0 50%;-webkit-text-stroke:0.08px">キーボード</span></span>入力</div><div class="a fr" style="left:1744px;top:549.5px;width:165px;height:78.5px"></div><div class="a hd" style="left:1748px;top:541px;width:158px;height:16px"></div><div class="a" style="left:1754px;top:548px;width:7px;height:1px;background:#000;"></div><div class="a" style="left:1804px;top:541.5px;font-size:12px;color:#000;white-space:pre;line-height:15px;"><span style="display:inline-block;width:46.00px;vertical-align:top"><span style="display:inline-block;transform:scaleX(0.767);transform-origin:0 50%;-webkit-text-stroke:0.18px">パラメータ</span></span></div><div class="a" style="left:1799px;top:565.5px;font-size:12px;color:#000;white-space:pre;line-height:15px;">長<span style="display:inline-block;width:8.33px;vertical-align:top"><span style="display:inline-block;transform:scaleX(0.694);transform-origin:0 50%;-webkit-text-stroke:0.18px">さ</span></span> :</div><div class="a inp" style="left:1829.5px;top:565px;width:52.5px;height:16px"></div><div class="a" style="left:1833px;top:566px;font-size:11px;color:#000;white-space:pre;line-height:14px;">0.0</div><div class="a" style="left:1885px;top:565px;width:11px;height:16px;box-sizing:border-box;border:1px solid #fff;border-right-color:#a0a0a0;border-bottom-color:#a0a0a0;"></div><svg style="left:1886px;top:566px" width="9" height="14" viewBox="0 0 9 14"><polygon points="4.5,2 7.3,5.6 1.7,5.6" fill="#000"/><polygon points="4.5,12 7.3,8.4 1.7,8.4" fill="#000"/></svg><div class="a" style="left:1806px;top:586.5px;font-size:12px;color:#000;white-space:pre;line-height:15px;letter-spacing:0.44px;">幅 :</div><div class="a inp" style="left:1829.5px;top:586px;width:52.5px;height:16px"></div><div class="a" style="left:1833px;top:587px;font-size:11px;color:#000;white-space:pre;line-height:14px;">0.0</div><div class="a" style="left:1885px;top:586px;width:11px;height:16px;box-sizing:border-box;border:1px solid #fff;border-right-color:#a0a0a0;border-bottom-color:#a0a0a0;"></div><svg style="left:1886px;top:587px" width="9" height="14" viewBox="0 0 9 14"><polygon points="4.5,2 7.3,5.6 1.7,5.6" fill="#000"/><polygon points="4.5,12 7.3,8.4 1.7,8.4" fill="#000"/></svg><div class="a" style="left:1782px;top:607.5px;font-size:12px;color:#000;white-space:pre;line-height:15px;letter-spacing:0.27px;">角半径 :</div><div class="a inp" style="left:1829.5px;top:607px;width:52.5px;height:16px"></div><div class="a" style="left:1833px;top:608px;font-size:11px;color:#000;white-space:pre;line-height:14px;">0.0</div><div class="a" style="left:1885px;top:607px;width:11px;height:16px;box-sizing:border-box;border:1px solid #fff;border-right-color:#a0a0a0;border-bottom-color:#a0a0a0;"></div><svg style="left:1886px;top:608px" width="9" height="14" viewBox="0 0 9 14"><polygon points="4.5,2 7.3,5.6 1.7,5.6" fill="#000"/><polygon points="4.5,12 7.3,8.4 1.7,8.4" fill="#000"/></svg>
<div id="ls" class="a"></div><div id="lstop" class="a"></div><div class="a" style="left:3px;top:88px;width:33px;height:1px;background:#a0a0a0;"></div><div class="a" style="left:3px;top:89px;width:33px;height:1px;background:#fff;"></div><div class="a" style="left:38px;top:84px;width:1px;height:10px;background:#a8a8a8;"></div><div class="a" style="left:9px;top:913px;width:21px;height:21px;box-sizing:border-box;border:1px solid #7a7a7a;border-radius:3px;background:#b4b4b4;"></div><svg style="left:15px;top:917px" width="9" height="12" viewBox="0 0 9 12"><polygon points="1.5,1 7.5,6 1.5,11" fill="#000"/></svg><div class="a" style="left:4px;top:944px;width:36px;height:44px;border-radius:4px 0 0 4px;background:linear-gradient(#bcc5ca,#b4cbd8 45%,#a6d4ee 80%);"></div><div class="a" style="left:7px;top:951px;width:31px;height:28px;box-sizing:border-box;border:1px solid #767c82;border-radius:2px;background:linear-gradient(#a9adb0,#8b9195);"></div><div id="tsl" class="a"></div><div id="trk" class="a"></div><div id="trkl" class="a"></div><div class="a" style="left:40px;top:945px;width:15px;height:17px;background:#f0f0f0;border-right:1px solid #b8b8b8;"></div><div class="a" style="left:44px;top:946.5px;font-size:12px;color:#000;white-space:pre;line-height:15px;">&lt;</div><div class="a" style="left:57px;top:945px;width:124px;height:17px;box-sizing:border-box;background:#f0f0f0;border-top:1px solid #fff;border-left:1px solid #fff;border-right:2px solid #000;border-bottom:2px solid #000;"></div><div class="a" style="left:100px;top:946.5px;font-size:11.5px;color:#000;white-space:pre;line-height:15px;">0 / 100</div><div class="a" style="left:182px;top:945px;width:14px;height:17px;background:#f0f0f0;"></div><div class="a" style="left:185.5px;top:946.5px;font-size:12px;color:#000;white-space:pre;line-height:15px;">&gt;</div><svg style="left:53px;top:969px" width="18" height="17" viewBox="0 0 18 17"><rect x="0.8" y="0.8" width="15.6" height="4.4" fill="#fff" stroke="#000" stroke-width="1.6"/><path d="M2.5 3.4Q5 1.4 8 3.2T14.5 3" fill="none" stroke="#000" stroke-width="0.9"/><path d="M4.5 11.5V7.2M2.8 9L4.5 7L6.2 9M12.5 7V11.3M10.8 9.5L12.5 11.5L14.2 9.5" fill="none" stroke="#000" stroke-width="1"/><rect x="0" y="12.3" width="17.2" height="4" fill="#000"/><path d="M2 14.3H8M10 14.3H15.5" stroke="#fff" stroke-width="1"/></svg><svg style="left:0;top:960px" width="1919" height="32" viewBox="0 960 1919 32"><rect x="92.5" y="965.5" width="8" height="24" fill="#7f9fc4" stroke="#5a7aa0" stroke-width="1"/><path d="M96.5 965V976M96.5 987V990M112.5 965V975.5M128.5 965V975.5M144.5 965V975.5M160.5 965V975.5M176.5 965V976M176.5 987V990M192.5 965V975.5M207.5 965V975.5M223.5 965V975.5M239.5 965V975.5M255.5 965V976M255.5 987V990M271.5 965V975.5M287.5 965V975.5M302.5 965V975.5M318.5 965V975.5M334.5 965V976M334.5 987V990M350.5 965V975.5M366.5 965V975.5M382.5 965V975.5M397.5 965V975.5M413.5 965V976M413.5 987V990M429.5 965V975.5M445.5 965V975.5M461.5 965V975.5M477.5 965V975.5M492.5 965V976M492.5 987V990M508.5 965V975.5M524.5 965V975.5M540.5 965V975.5M556.5 965V975.5M572.5 965V976M572.5 987V990M588.5 965V975.5M603.5 965V975.5M619.5 965V975.5M635.5 965V975.5M651.5 965V976M651.5 987V990M667.5 965V975.5M683.5 965V975.5M698.5 965V975.5M714.5 965V975.5M730.5 965V976M730.5 987V990M746.5 965V975.5M762.5 965V975.5M778.5 965V975.5M793.5 965V975.5M809.5 965V976M809.5 987V990M825.5 965V975.5M841.5 965V975.5M857.5 965V975.5M873.5 965V975.5M888.5 965V976M888.5 987V990M904.5 965V975.5M920.5 965V975.5M936.5 965V975.5M952.5 965V975.5M968.5 965V976M968.5 987V990M984.5 965V975.5M999.5 965V975.5M1015.5 965V975.5M1031.5 965V975.5M1047.5 965V976M1047.5 987V990M1063.5 965V975.5M1079.5 965V975.5M1094.5 965V975.5M1110.5 965V975.5M1126.5 965V976M1126.5 987V990M1142.5 965V975.5M1158.5 965V975.5M1174.5 965V975.5M1189.5 965V975.5M1205.5 965V976M1205.5 987V990M1221.5 965V975.5M1237.5 965V975.5M1253.5 965V975.5M1269.5 965V975.5M1284.5 965V976M1284.5 987V990M1300.5 965V975.5M1316.5 965V975.5M1332.5 965V975.5M1348.5 965V975.5M1364.5 965V976M1364.5 987V990M1380.5 965V975.5M1395.5 965V975.5M1411.5 965V975.5M1427.5 965V975.5M1443.5 965V976M1443.5 987V990M1459.5 965V975.5M1475.5 965V975.5M1490.5 965V975.5M1506.5 965V975.5M1522.5 965V976M1522.5 987V990M1538.5 965V975.5M1554.5 965V975.5M1570.5 965V975.5M1585.5 965V975.5M1601.5 965V976M1601.5 987V990M1617.5 965V975.5M1633.5 965V975.5M1649.5 965V975.5M1665.5 965V975.5M1680.5 965V976M1680.5 987V990" stroke="#707070" stroke-width="1"/></svg><div class="a" style="left:92.9375px;top:976.5px;font-size:11px;color:#35506e;white-space:pre;line-height:12px;">0</div><div class="a" style="left:172.137px;top:976.5px;font-size:11px;color:#111;white-space:pre;line-height:12px;">5</div><div class="a" style="left:248.275px;top:976.5px;font-size:11px;color:#111;white-space:pre;line-height:12px;">10</div><div class="a" style="left:327.475px;top:976.5px;font-size:11px;color:#111;white-space:pre;line-height:12px;">15</div><div class="a" style="left:406.675px;top:976.5px;font-size:11px;color:#111;white-space:pre;line-height:12px;">20</div><div class="a" style="left:485.875px;top:976.5px;font-size:11px;color:#111;white-space:pre;line-height:12px;">25</div><div class="a" style="left:565.075px;top:976.5px;font-size:11px;color:#111;white-space:pre;line-height:12px;">30</div><div class="a" style="left:644.275px;top:976.5px;font-size:11px;color:#111;white-space:pre;line-height:12px;">35</div><div class="a" style="left:723.475px;top:976.5px;font-size:11px;color:#111;white-space:pre;line-height:12px;">40</div><div class="a" style="left:802.675px;top:976.5px;font-size:11px;color:#111;white-space:pre;line-height:12px;">45</div><div class="a" style="left:881.875px;top:976.5px;font-size:11px;color:#111;white-space:pre;line-height:12px;">50</div><div class="a" style="left:961.075px;top:976.5px;font-size:11px;color:#111;white-space:pre;line-height:12px;">55</div><div class="a" style="left:1040.28px;top:976.5px;font-size:11px;color:#111;white-space:pre;line-height:12px;">60</div><div class="a" style="left:1119.47px;top:976.5px;font-size:11px;color:#111;white-space:pre;line-height:12px;">65</div><div class="a" style="left:1198.67px;top:976.5px;font-size:11px;color:#111;white-space:pre;line-height:12px;">70</div><div class="a" style="left:1277.88px;top:976.5px;font-size:11px;color:#111;white-space:pre;line-height:12px;">75</div><div class="a" style="left:1357.08px;top:976.5px;font-size:11px;color:#111;white-space:pre;line-height:12px;">80</div><div class="a" style="left:1436.28px;top:976.5px;font-size:11px;color:#111;white-space:pre;line-height:12px;">85</div><div class="a" style="left:1515.47px;top:976.5px;font-size:11px;color:#111;white-space:pre;line-height:12px;">90</div><div class="a" style="left:1594.67px;top:976.5px;font-size:11px;color:#111;white-space:pre;line-height:12px;">95</div><div class="a" style="left:1670.82px;top:976.5px;font-size:11px;color:#111;white-space:pre;line-height:12px;">100</div><div class="a" style="left:40px;top:963px;width:1696px;height:1px;background:#fbfbfb;"></div><div class="a" style="left:40px;top:964px;width:1696px;height:1px;background:#a8a8a8;"></div><div class="a" style="left:40px;top:989px;width:1646px;height:1px;background:#fbfbfb;"></div><div id="st" class="a"></div><div class="a" style="left:2px;top:993px;width:96px;height:21px;box-sizing:border-box;border:1px solid #9a9a9a;border-right-color:#fff;border-bottom-color:#fff;background:#dcc4c4;"></div><div class="a" style="left:2px;top:1016px;width:96px;height:21px;box-sizing:border-box;border:1px solid #9a9a9a;border-right-color:#fff;border-bottom-color:#fff;background:#fff;"></div><div class="a" style="left:7.5px;top:1017px;font-size:12px;color:#000;white-space:pre;line-height:15px;">MAXScript <span style="display:inline-block;width:25.98px;vertical-align:top"><span style="display:inline-block;transform:scaleX(0.722);transform-origin:0 50%;-webkit-text-stroke:0.18px">によう</span></span></div><div class="a" style="left:102px;top:992px;width:1px;height:48px;background:#fff;"></div><div class="a" style="left:104px;top:992px;width:1px;height:48px;background:#a0a0a0;"></div><div class="a sunk" style="left:107px;top:994px;width:901px;height:21px"></div><div class="a" style="left:113px;top:997px;font-size:12px;color:#000;white-space:pre;line-height:15px;">何<span style="display:inline-block;width:9.38px;vertical-align:top"><span style="display:inline-block;transform:scaleX(0.781);transform-origin:0 50%;-webkit-text-stroke:0.18px">も</span></span>選択<span style="display:inline-block;width:65.62px;vertical-align:top"><span style="display:inline-block;transform:scaleX(0.781);transform-origin:0 50%;-webkit-text-stroke:0.18px">されていません</span></span></div><div class="a" style="left:107px;top:1018px;width:1226px;height:1px;background:#a0a0a0;"></div><div class="a" style="left:107px;top:1019px;width:1px;height:21px;background:#a0a0a0;"></div><div class="a" style="left:113px;top:1021.5px;font-size:12px;color:#000;white-space:pre;line-height:15px;"><span style="display:inline-block;width:83.57px;vertical-align:top"><span style="display:inline-block;transform:scaleX(0.696);transform-origin:0 50%;-webkit-text-stroke:0.18px">クリックとドラッグで</span></span>作成処理<span style="display:inline-block;width:8.36px;vertical-align:top"><span style="display:inline-block;transform:scaleX(0.696);transform-origin:0 50%;-webkit-text-stroke:0.18px">を</span></span>開始<span style="display:inline-block;width:25.07px;vertical-align:top"><span style="display:inline-block;transform:scaleX(0.696);transform-origin:0 50%;-webkit-text-stroke:0.18px">します</span></span></div><svg style="left:1015px;top:995px" width="12" height="17" viewBox="0 0 12 17"><path d="M6 1.2A4.9 4.9 0 0 1 10.9 6.1Q10.9 8.6 8.3 11.5H3.7Q1.1 8.6 1.1 6.1A4.9 4.9 0 0 1 6 1.2Z" fill="#b6b6b6" stroke="#969696" stroke-width="0.9"/><path d="M4.6 11.5V15.8M7.4 11.5V15.8" stroke="#9a9a9a" stroke-width="1.4"/><path d="M3.6 4.6Q4.4 3 6 2.8" stroke="#d8d8d8" stroke-width="0.9" fill="none"/></svg><svg style="left:1041px;top:996px" width="13" height="16" viewBox="0 0 13 16"><path d="M3.4 8V5Q3.4 1.6 6.5 1.6T9.6 5V8" fill="none" stroke="#a4a4a4" stroke-width="1.9"/><rect x="1.2" y="7.8" width="10.6" height="7" rx="1" fill="#cacaca" stroke="#9a9a9a" stroke-width="0.9"/><path d="M6.5 9.5V13" stroke="#8a8a8a" stroke-width="1.1"/></svg><svg style="left:1067px;top:996px" width="16" height="16" viewBox="0 0 16 16"><rect x="0.7" y="0.7" width="14" height="14" rx="1.6" fill="#eceef2" stroke="#3b424f" stroke-width="1.3"/><path d="M7.7 0.7V4.6M7.7 10.8V14.7M0.7 7.7H4.6M10.8 7.7H14.7" stroke="#3b424f" stroke-width="1.2"/><circle cx="7.7" cy="7.7" r="3.1" fill="#f4f5f8" stroke="#3b424f" stroke-width="1.2"/></svg><div class="a" style="left:1090.5px;top:997.5px;font-size:11.5px;color:#000;white-space:pre;line-height:15px;letter-spacing:-0.69px;-webkit-text-stroke:0.3px #000;">X:</div><div class="a inp2" style="left:1108px;top:994.5px;width:57px;height:20px"></div><div class="a" style="left:1179.5px;top:997.5px;font-size:11.5px;color:#000;white-space:pre;line-height:15px;letter-spacing:-0.37px;-webkit-text-stroke:0.3px #000;">Y:</div><div class="a inp2" style="left:1197px;top:994.5px;width:57px;height:20px"></div><div class="a" style="left:1268.5px;top:997.5px;font-size:11.5px;color:#000;white-space:pre;line-height:15px;letter-spacing:-0.37px;-webkit-text-stroke:0.3px #000;">Z:</div><div class="a inp2" style="left:1286px;top:994.5px;width:57px;height:20px"></div><div class="a sunk" style="left:1357.5px;top:994.5px;width:100px;height:20px"></div><div class="a" style="left:1364px;top:997px;font-size:12px;color:#000;white-space:pre;line-height:15px;"><span style="display:inline-block;width:29.97px;vertical-align:top"><span style="display:inline-block;transform:scaleX(0.624);transform-origin:0 50%;-webkit-text-stroke:0.18px">グリッド</span></span> = 10.0</div><div class="a" style="left:1335px;top:1020px;width:20px;height:20px;box-sizing:border-box;border:1px solid #c0c0c0;border-right-color:#fdfdfd;background:#f6f6f6;"></div><div class="a" style="left:1337px;top:1022px;width:17px;height:18px;background:#efcb5b;"></div><svg style="left:1338.5px;top:1023px" width="14" height="15" viewBox="0 0 14 15"><rect x="0.7" y="3.2" width="9.6" height="10.5" rx="1.5" fill="none" stroke="#3b424f" stroke-width="1.1"/><rect x="3.2" y="0.7" width="9.6" height="10.5" rx="1.5" fill="none" stroke="#3b424f" stroke-width="1.1"/><path d="M1 3.6L3.5 1M10 13.5L12.6 11" stroke="#3b424f" stroke-width="1"/></svg><div class="a sunk" style="left:1357.5px;top:1020px;width:100px;height:21px"></div><div class="a" style="left:1364px;top:1022.5px;font-size:12px;color:#000;white-space:pre;line-height:15px;">時間<span style="display:inline-block;width:25.00px;vertical-align:top"><span style="display:inline-block;transform:scaleX(0.694);transform-origin:0 50%;-webkit-text-stroke:0.18px">タグを</span></span>追加</div><div class="a rb" style="left:1461.5px;top:992.5px;width:44px;height:44px"></div><svg style="left:1470px;top:1008px" width="27" height="14" viewBox="0 0 27 14"><circle cx="5" cy="7" r="3.7" fill="none" stroke="#8c8c8c" stroke-width="2.1"/><path d="M8.8 7H25.5M19.2 7V11.5M23 7V11.5" fill="none" stroke="#8c8c8c" stroke-width="2.3"/></svg><div class="a rb" style="left:1509px;top:993.5px;width:64px;height:20.5px"></div><div class="a" style="left:1514.5px;top:997px;font-size:12px;color:#000;white-space:pre;line-height:15px;"><span style="display:inline-block;width:27.99px;vertical-align:top"><span style="display:inline-block;transform:scaleX(0.778);transform-origin:0 50%;-webkit-text-stroke:0.18px">オート</span></span> <span style="display:inline-block;width:18.66px;vertical-align:top"><span style="display:inline-block;transform:scaleX(0.778);transform-origin:0 50%;-webkit-text-stroke:0.18px">キー</span></span></div><div class="a rb" style="left:1509px;top:1015px;width:64px;height:21.5px"></div><div class="a" style="left:1516px;top:1019.5px;font-size:12px;color:#000;white-space:pre;line-height:15px;"><span style="display:inline-block;width:26.79px;vertical-align:top"><span style="display:inline-block;transform:scaleX(0.744);transform-origin:0 50%;-webkit-text-stroke:0.18px">セット</span></span> <span style="display:inline-block;width:17.86px;vertical-align:top"><span style="display:inline-block;transform:scaleX(0.744);transform-origin:0 50%;-webkit-text-stroke:0.18px">キー</span></span></div><div class="a" style="left:1576.5px;top:993px;width:114px;height:21px;box-sizing:border-box;border:1px solid #8a8a8a;border-right-color:#fbfbfb;border-bottom-color:#fbfbfb;box-shadow:inset 1px 1px 0 #b0b0b0;background:linear-gradient(#f4f4f4,#e8e8e8 50%,#d2d2d2);"></div><div class="a" style="left:1580px;top:996.5px;font-size:12px;color:#000;white-space:pre;line-height:15px;letter-spacing:0.00px;">選択</div><svg style="left:1680px;top:1001.5px" width="8" height="5" viewBox="0 0 8 5"><polygon points="0,0 7.5,0 3.75,4.5" fill="#000"/></svg><svg style="left:1579px;top:1019px" width="17" height="16" viewBox="0 0 17 16"><path d="M6 1.5H15M0.5 14H10" stroke="#7a8ae0" stroke-width="1.2"/><path d="M1 8L5 14L11 1.5L15 7" fill="none" stroke="#cc1c1c" stroke-width="1.3"/><circle cx="5" cy="14" r="1" fill="#111"/><circle cx="11" cy="1.5" r="1" fill="#111"/></svg><svg style="left:1595px;top:1033px" width="3" height="3" viewBox="0 0 3 3"><polygon points="0,3 3,3 3,0" fill="#222"/></svg><div class="a rb" style="left:1603px;top:1016.5px;width:88px;height:20px"></div><div class="a" style="left:1612px;top:1019.5px;font-size:12px;color:#000;white-space:pre;line-height:15px;"><span style="display:inline-block;width:18.21px;vertical-align:top"><span style="display:inline-block;transform:scaleX(0.759);transform-origin:0 50%;-webkit-text-stroke:0.18px">キー</span></span> <span style="display:inline-block;width:36.43px;vertical-align:top"><span style="display:inline-block;transform:scaleX(0.759);transform-origin:0 50%;-webkit-text-stroke:0.18px">フィルタ</span></span>...</div><svg style="left:0;top:990px" width="1919" height="50" viewBox="0 990 1919 50"><rect x="1702" y="997.6" width="2.3" height="11" rx="0.8" fill="#1e2228"/><polygon points="1704.3,1003.1 1711.3,998 1711.3,1008.2" fill="#1e2228"/><polygon points="1710.8,1003.1 1717.8,998 1717.8,1008.2" fill="#1e2228"/><path d="M1723.5 996V1011" stroke="#a8a8a8"/><path d="M1724.5 996V1011" stroke="#fff"/><path d="M1796.5 996V1011" stroke="#a8a8a8"/><path d="M1797.5 996V1011" stroke="#fff"/><polygon points="1727.7,1003.1 1736.4,998 1736.4,1008.2" fill="#1e2228"/><rect x="1737" y="998" width="3" height="10.2" rx="1.2" fill="#1e2228"/><rect x="1741" y="998" width="3" height="10.2" rx="1.2" fill="#1e2228"/><polygon points="1754,998.2 1764,1003.6 1754,1009" fill="#1e2228"/><polygon points="1765,1011.5 1768,1011.5 1768,1008.5" fill="#222"/><rect x="1774.3" y="998" width="3" height="10.2" rx="1.2" fill="#1e2228"/><rect x="1778.3" y="998" width="3" height="10.2" rx="1.2" fill="#1e2228"/><polygon points="1790.5,1003.1 1781.8,998 1781.8,1008.2" fill="#1e2228"/><polygon points="1800,998 1807,1003.1 1800,1008.2" fill="#1e2228"/><polygon points="1806.5,998 1813.5,1003.1 1806.5,1008.2" fill="#1e2228"/><rect x="1813.4" y="997.6" width="2.3" height="11" rx="0.8" fill="#1e2228"/><rect x="1702" y="1020.8" width="1.7" height="10" fill="#1e2228"/><polygon points="1703.7,1025.8 1709.6,1021.6 1709.6,1030" fill="#1e2228"/><polygon points="1716.6,1025.8 1710.7,1021.6 1710.7,1030" fill="#1e2228"/><rect x="1716.6" y="1020.8" width="1.7" height="10" fill="#1e2228"/><path d="M1722.5 1019V1035" stroke="#a8a8a8"/><path d="M1723.5 1019V1035" stroke="#fff"/><path d="M1802.5 1019V1035" stroke="#a8a8a8"/><path d="M1803.5 1019V1035" stroke="#fff"/><path d="M1835 1006L1840.5 1011" stroke="#2c323c" stroke-width="2.6" stroke-linecap="round"/><circle cx="1832" cy="1002.5" r="4.7" fill="#f2f6fa" stroke="#3b424f" stroke-width="1.2"/><path d="M1829.3 1001.5Q1830 999.5 1832 999.3" stroke="#b8c8d8" stroke-width="1" fill="none"/><path d="M1839 998.2H1843M1841 996.2V1000.2M1839.2 1002.2H1842.8" stroke="#222" stroke-width="1"/><rect x="1851" y="997.5" width="11" height="10" fill="#f4f5f7" stroke="#3b424f" stroke-width="1.1"/><path d="M1856.5 997.5V1007.5M1851 1002.5H1862" stroke="#3b424f" stroke-width="0.9"/><circle cx="1860" cy="1006" r="3.2" fill="#eef0f3" stroke="#3b424f" stroke-width="1.1"/><path d="M1862.3 1008.3L1865.5 1011.5" stroke="#3b424f" stroke-width="1.6"/><path d="M1873.5 1000V996.5H1877M1886 996.5H1889.5V1000M1889.5 1008V1011.5H1886M1877 1011.5H1873.5V1008" fill="none" stroke="#222" stroke-width="1.1"/><path d="M1877 1001L1879 999H1886V1006L1884 1008H1877Z" fill="#8faa62" stroke="#3a4a2c" stroke-width="0.9"/><path d="M1877 1001H1884V1008M1884 1001L1886 999" fill="none" stroke="#2a4a22" stroke-width="0.8"/><rect x="1900.5" y="996.5" width="11" height="10" fill="#f4f5f7" stroke="#3b424f" stroke-width="1"/><path d="M1906 996.5V1006.5M1900.5 1001.5H1911.5" stroke="#3b424f" stroke-width="0.9"/><path d="M1897 1004.5L1899 1002.5H1905.5V1009L1903.5 1011H1897Z" fill="#8faa62" stroke="#3a4a2c" stroke-width="0.9"/><path d="M1897 1004.5H1903.5V1011M1903.5 1004.5L1905.5 1002.5" fill="none" stroke="#2a4a22" stroke-width="0.8"/><rect x="1807.5" y="1020.5" width="11" height="10" rx="1" fill="#dfe4ee" stroke="#3b424f" stroke-width="1.1"/><rect x="1809" y="1022" width="3.5" height="3" fill="#24529f"/><rect x="1814" y="1022" width="3" height="3" fill="#8e95a3"/><circle cx="1818.5" cy="1030.5" r="4.2" fill="#fff" stroke="#3b424f" stroke-width="1"/><path d="M1818.5 1028V1030.5H1820.5" fill="none" stroke="#3b424f" stroke-width="0.9"/><path d="M1827 1020.5L1842 1027.5L1827 1034.5" fill="none" stroke="#6a7282" stroke-width="1.1" stroke-linejoin="round"/><path d="M1830.5 1022.2Q1834 1027.5 1830.5 1032.8" fill="none" stroke="#6a7282" stroke-width="1"/><polygon points="1841,1036 1844,1036 1844,1033" fill="#222"/><path d="M1853 1029.5V1024.5Q1853 1023.2 1854.2 1023.4L1855.2 1027V1021.5Q1856.3 1020.2 1857.3 1021.5V1026.5V1020.5Q1858.5 1019.2 1859.6 1020.5V1026.5V1021.5Q1860.8 1020.4 1861.8 1021.7V1027.5L1863.8 1025Q1865.5 1024.6 1865 1026.2L1862 1032.5Q1860.5 1035 1857.5 1034.8Q1854 1034.5 1853 1029.5Z" fill="#fff" stroke="#222" stroke-width="0.9" stroke-linejoin="round"/><polygon points="1864.5,1036 1867.5,1036 1867.5,1033" fill="#222"/><circle cx="1881" cy="1029" r="5.2" fill="none" stroke="#3b424f" stroke-width="1"/><path d="M1882 1030L1882 1021.5M1882 1030L1890 1030M1882 1030L1876.5 1035" stroke="#111" stroke-width="1.1"/><path d="M1882 1030V1024.5A5.5 5.5 0 0 1 1887.5 1030Z" fill="#8faa62" stroke="#3a4a2c" stroke-width="0.7"/><path d="M1880.3 1023L1882 1020.5L1883.7 1023M1888.2 1028.3L1890.5 1030L1888.2 1031.7M1876 1032.8L1875.8 1035.6L1878.6 1035.4" fill="none" stroke="#111" stroke-width="1"/><polygon points="1888.5,1037 1891.5,1037 1891.5,1034" fill="#222"/><rect x="1896.5" y="1020.5" width="11" height="10.5" fill="#f4f5f7" stroke="#222" stroke-width="1.1"/><path d="M1907.5 1025V1034.5H1900" fill="none" stroke="#222" stroke-width="1.1"/><path d="M1899 1023L1905 1028.5M1899 1026.5V1023H1902.5" fill="none" stroke="#222" stroke-width="1.1"/></svg><div class="a inp2" style="left:1725.5px;top:1016.5px;width:63px;height:20px"></div><div class="a" style="left:1729px;top:1020px;font-size:11px;color:#000;white-space:pre;line-height:14px;">0</div><svg style="left:1791px;top:1019px" width="9" height="16" viewBox="0 0 9 16"><polygon points="4,2 6.8,6 1.2,6" fill="#000"/><polygon points="4,14 6.8,10 1.2,10" fill="#000"/><path d="M0 0.5H7.5V15.5" fill="none" stroke="#c0c0c0" stroke-width="0.6"/></svg>
</body></html>
